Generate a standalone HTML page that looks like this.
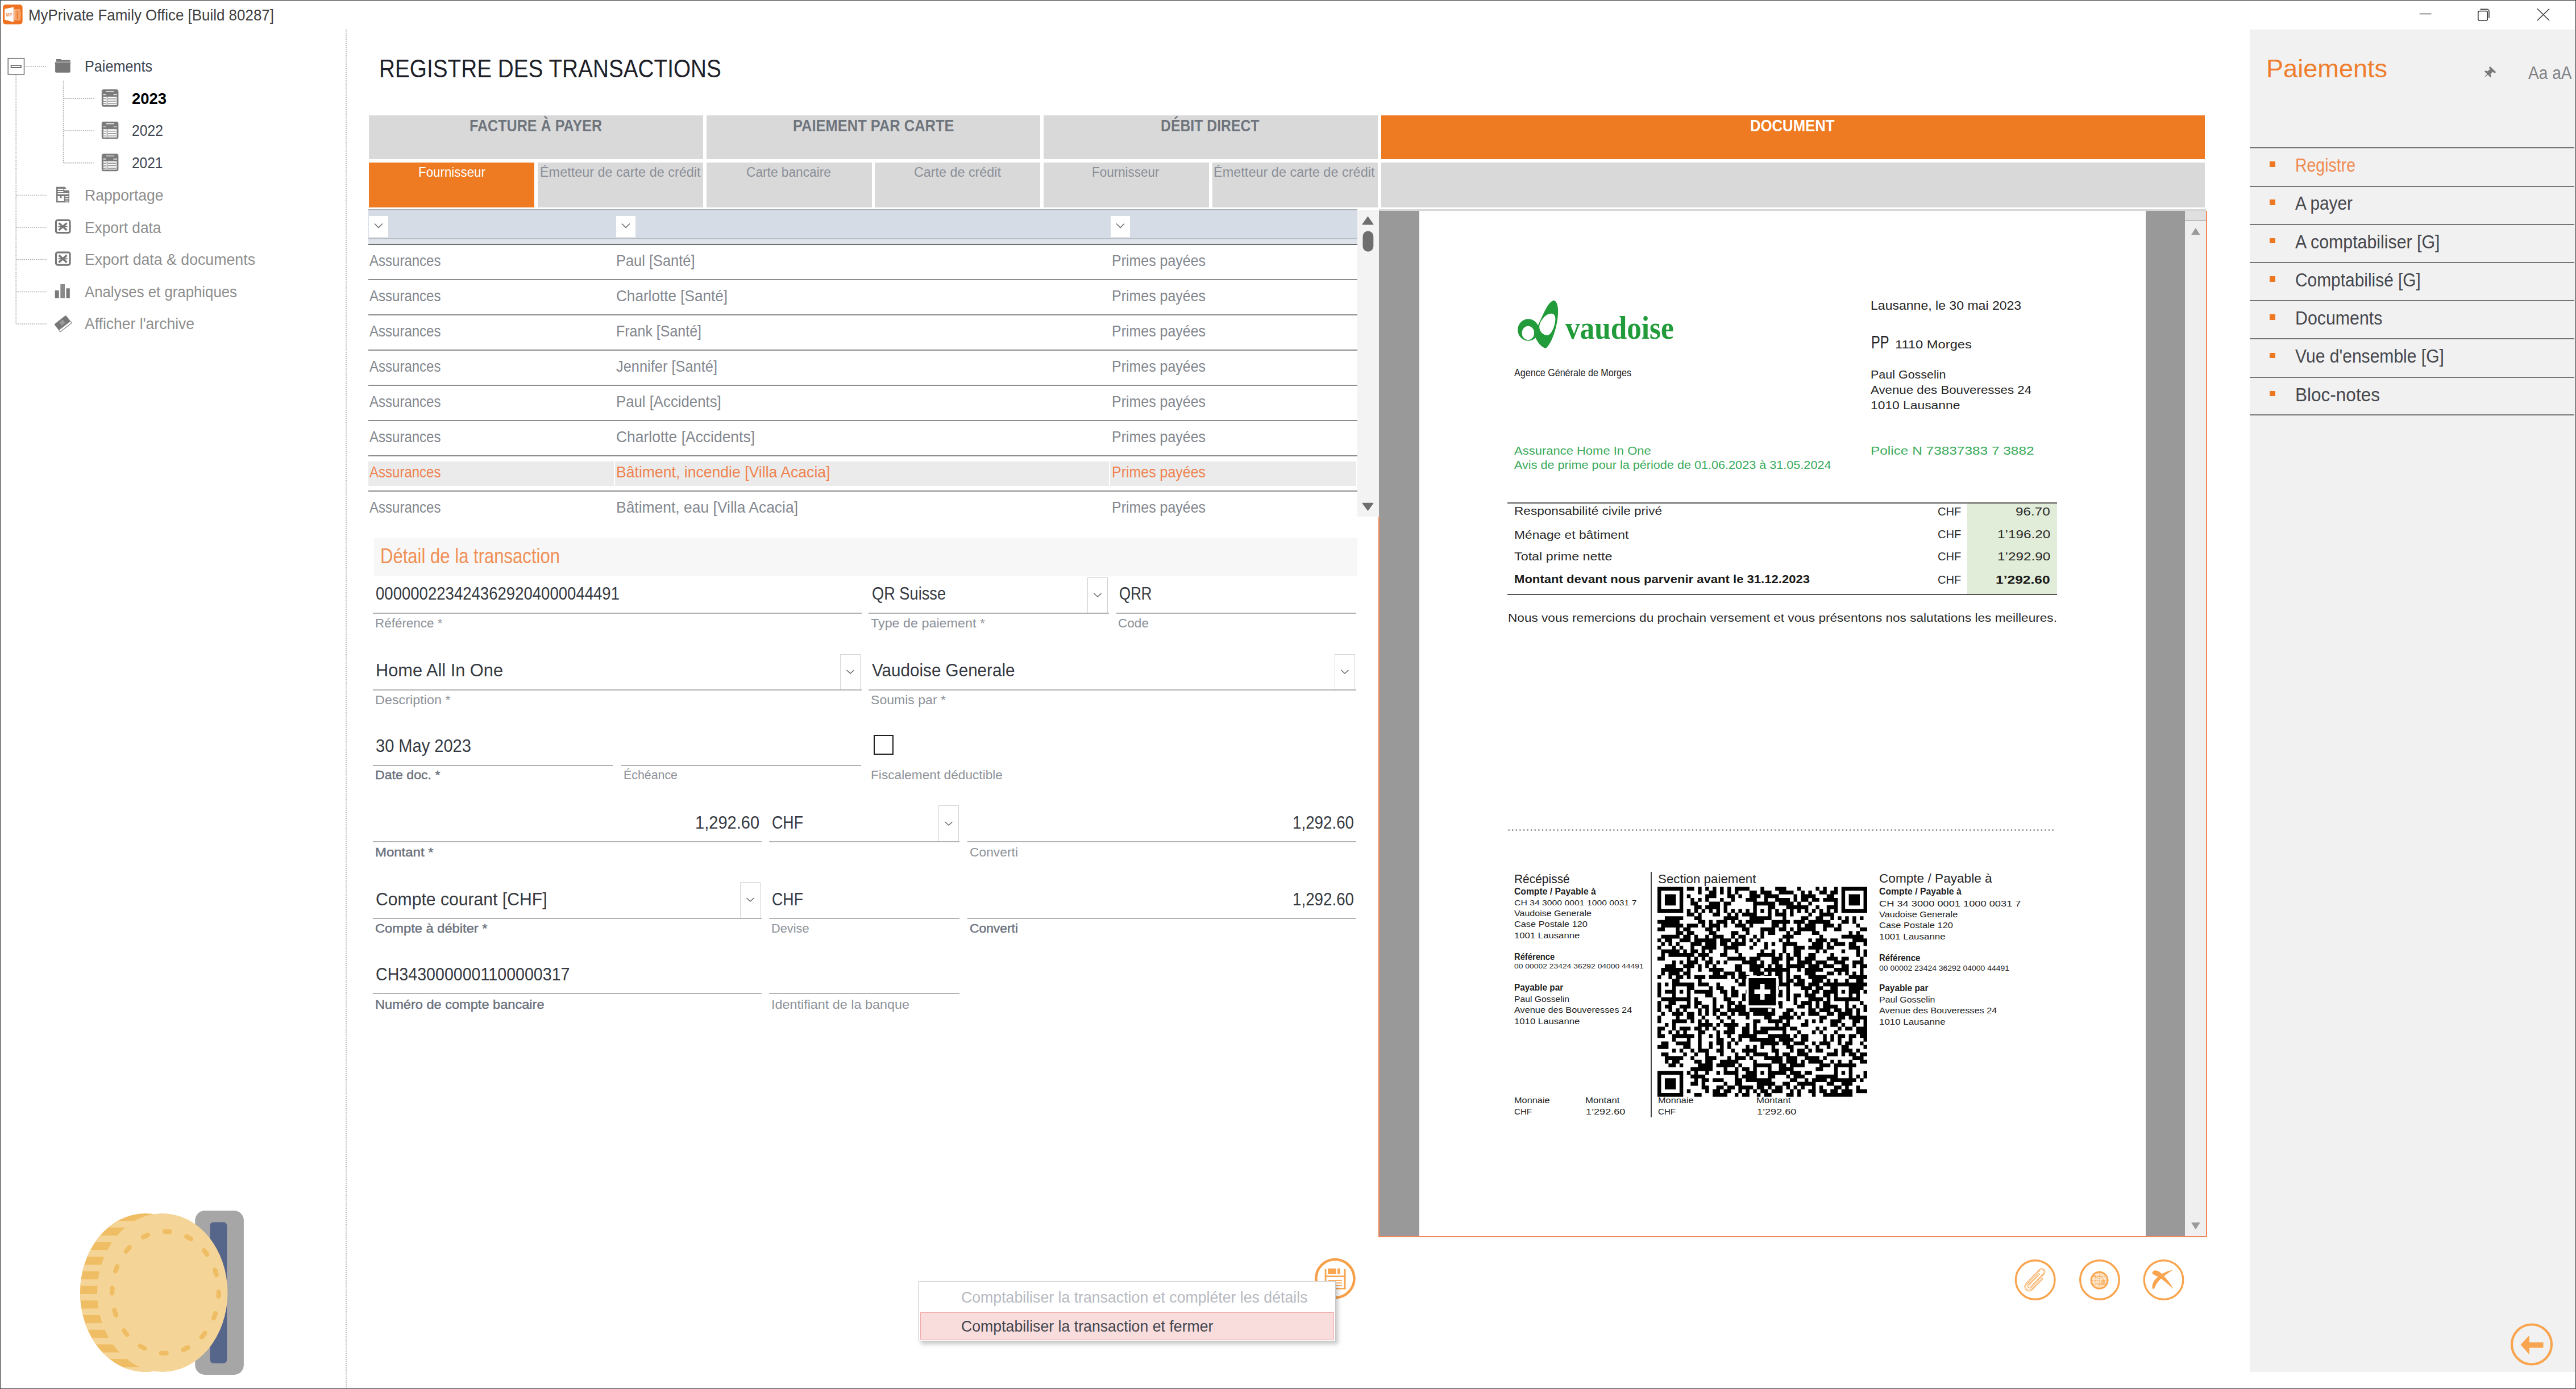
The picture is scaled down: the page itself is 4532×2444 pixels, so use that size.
<!DOCTYPE html>
<html lang="fr"><head><meta charset="utf-8"><title>MyPrivate Family Office</title>
<style>
html,body{margin:0;padding:0;background:#fff;}
body{width:4532px;height:2444px;position:relative;overflow:hidden;font-family:"Liberation Sans",sans-serif;}
.b{position:absolute;}
.t{position:absolute;white-space:pre;}
</style></head><body>
<svg class="b" style="left:0;top:0" width="45" height="48" viewBox="0 0 45 48">
<rect x="5" y="8.1" width="34.6" height="34.7" rx="5" fill="#ee7220"/>
<path d="M8.1 15.8 L23.9 12.6 V39 L8.1 34.5 Z" fill="#fff"/>
<path d="M25 16 H35.5 L37 24 L35.5 36 H25 Z" fill="#f4a46c"/>
<path d="M30.5 19.5 V34" stroke="#ee7220" stroke-width="1.6"/>
<path d="M25.5 18 V35" stroke="#fbd2b4" stroke-width="1" stroke-dasharray="1.5 1.5"/>
<text x="10.6" y="28.6" font-size="8.6" font-family="Liberation Sans" font-weight="700" fill="#f29558" textLength="11" lengthAdjust="spacingAndGlyphs">MP</text>
</svg>
<div class="t" style="left:50.00px;top:13.19px;font-size:27.30px;line-height:27.30px;color:#404040;transform:scaleX(0.9501);transform-origin:0 0;">MyPrivate Family Office [Build 80287]</div>
<svg class="b" style="left:4240px;top:5px" width="260" height="45" viewBox="4240 5 260 45">
<path d="M4256.7 24.5 H4277.5" stroke="#333" stroke-width="1.4"/>
<rect x="4359.8" y="19.5" width="16.5" height="16.5" rx="2.5" fill="none" stroke="#333" stroke-width="1.6"/>
<path d="M4363.5 16.2 h11.5 a4 4 0 0 1 4 4 v11.5" fill="none" stroke="#333" stroke-width="1.5"/>
<path d="M4464 15.5 L4485 36 M4485 15.5 L4464 36" stroke="#333" stroke-width="1.5"/>
</svg>
<svg class="b" style="left:0;top:0" width="620" height="2444"><g stroke="#a6a6a6" stroke-width="1.6" stroke-dasharray="1.7 1.7" fill="none"><path d="M45.0 117.0 H83.0"/><path d="M28.2 132.0 V570.5"/><path d="M29.0 343.5 H83.0"/><path d="M29.0 400.0 H83.0"/><path d="M29.0 456.5 H83.0"/><path d="M29.0 513.5 H83.0"/><path d="M29.0 570.0 H83.0"/><path d="M111.5 142.0 V287.0"/><path d="M112.0 173.2 H166.0"/><path d="M112.0 230.0 H166.0"/><path d="M112.0 286.6 H166.0"/><path d="M609.0 52.0 V2444.0"/></g></svg>
<svg class="b" style="left:12px;top:101px" width="34" height="34" viewBox="12 101 34 34">
<rect x="14.2" y="102.7" width="28.3" height="28.3" fill="#fff" stroke="#6e6e6e" stroke-width="1.5"/>
<rect x="19.5" y="115" width="17.5" height="3.8" fill="none" stroke="#555" stroke-width="1.5"/>
</svg>
<svg class="b" style="left:90px;top:95px" width="130" height="500" viewBox="90 95 130 500">
<g fill="#777">
<path d="M99 104 h8 l1.5 1.8 h15 v3 h-24.5 z"/>
<path d="M96.5 109.5 h28 l-0.8 4 v12.5 q0 1.8 -1.8 1.8 h-23 q-1.8 0 -1.8 -1.8 v-12.5 z"/>
</g>
<g id="yr">
<rect x="178.8" y="157.2" width="29.6" height="30.6" rx="3.5" fill="#7b7b7b"/>
<path d="M187 161 h14" stroke="#e8e8e8" stroke-width="1.6"/>
<path d="M181.5 166.5 h5 M199.5 166.5 h6.5" stroke="#e8e8e8" stroke-width="1.6"/>
<rect x="181.8" y="170.5" width="23.6" height="14.5" fill="#fff"/>
<path d="M182 174 h5 M182 178.5 h5 M182 182.5 h5 M190 174 h14.5 M190 178 h14.5 M190 182.5 h14.5 M188.5 171 v14" stroke="#8a8a8a" stroke-width="1.6"/>
</g>
<use href="#yr" y="56.8"/><use href="#yr" y="113.4"/>
<g fill="#7a7a7a">
<path d="M99 328.8 h15 l3.2 3.2 h-4 v3 h8.8 v21.3 h-23 z"/>
</g>
<g fill="#fff">
<rect x="101.5" y="332" width="10" height="2"/><rect x="101.5" y="336" width="10" height="2"/><rect x="101.5" y="340" width="19" height="2"/>
<rect x="101.5" y="345" width="11" height="9"/>
<rect x="114.5" y="345" width="6" height="1.5"/><rect x="114.5" y="349" width="6" height="1.5"/><rect x="114.5" y="353" width="6" height="1.5"/>
</g>
<rect x="105.5" y="344" width="3" height="5" fill="#7a7a7a"/>
<g id="xl">
<rect x="98.5" y="387.5" width="24.5" height="22" rx="3" fill="#fff" stroke="#777" stroke-width="3.2"/>
<path d="M103.5 392.5 L117.5 405 M117.5 392.5 L103.5 405" stroke="#777" stroke-width="3.5"/>
<path d="M102.5 398.7 h16" stroke="#777" stroke-width="2"/>
</g>
<use href="#xl" y="56.6"/>
<g fill="#7a7a7a">
<rect x="96.7" y="511" width="7" height="13.5"/><rect x="106.3" y="500" width="7.7" height="24.5" fill="#8a8a8a"/><rect x="116.5" y="507.3" width="6.3" height="17.2"/>
</g>
<g transform="translate(110.5 569) rotate(-38)">
<rect x="-13" y="-8" width="26" height="14" rx="1.5" fill="#777"/>
<rect x="-13" y="5" width="26" height="4" rx="1" fill="#fff" stroke="#8a8a8a" stroke-width="1.2"/>
<rect x="-4" y="-5" width="8" height="7" fill="#999"/>
</g>
</svg>
<div class="t" style="left:148.50px;top:103.32px;font-size:27.50px;line-height:27.50px;color:#3c4450;transform:scaleX(0.9158);transform-origin:0 0;">Paiements</div>
<div class="t" style="left:231.50px;top:159.92px;font-size:27.50px;line-height:27.50px;color:#000;font-weight:700;transform:scaleX(0.9969);transform-origin:0 0;">2023</div>
<div class="t" style="left:231.50px;top:216.32px;font-size:27.50px;line-height:27.50px;color:#3c4450;transform:scaleX(0.8989);transform-origin:0 0;">2022</div>
<div class="t" style="left:231.50px;top:272.72px;font-size:27.50px;line-height:27.50px;color:#3c4450;transform:scaleX(0.8907);transform-origin:0 0;">2021</div>
<div class="t" style="left:148.50px;top:329.92px;font-size:27.50px;line-height:27.50px;color:#8e8e8e;transform:scaleX(0.9637);transform-origin:0 0;">Rapportage</div>
<div class="t" style="left:148.50px;top:386.52px;font-size:27.50px;line-height:27.50px;color:#8e8e8e;transform:scaleX(0.9562);transform-origin:0 0;">Export data</div>
<div class="t" style="left:148.50px;top:443.12px;font-size:27.50px;line-height:27.50px;color:#8e8e8e;transform:scaleX(0.9715);transform-origin:0 0;">Export data &amp; documents</div>
<div class="t" style="left:148.50px;top:499.72px;font-size:27.50px;line-height:27.50px;color:#8e8e8e;transform:scaleX(0.9374);transform-origin:0 0;">Analyses et graphiques</div>
<div class="t" style="left:148.50px;top:556.32px;font-size:27.50px;line-height:27.50px;color:#8e8e8e;transform:scaleX(0.9631);transform-origin:0 0;">Afficher l&#x27;archive</div>
<svg class="b" style="left:130px;top:2120px" width="310" height="310" viewBox="130 2120 310 310">
<rect x="343.3" y="2130.2" width="85.6" height="288.7" rx="17" fill="#a6a6a6"/>
<rect x="369.5" y="2150.4" width="29.7" height="248.3" rx="6" fill="#56658a"/>
<clipPath id="coinclip"><ellipse cx="255.6" cy="2274.5" rx="114.7" ry="139.5"/></clipPath>
<ellipse cx="255.6" cy="2274.5" rx="114.7" ry="139.5" fill="#efbe64"/>
<g fill="#f5d597" clip-path="url(#coinclip)"><rect x="141" y="2122.6" width="130" height="11.5"/><rect x="141" y="2148.3" width="130" height="11.5"/><rect x="141" y="2174.0" width="130" height="11.5"/><rect x="141" y="2199.7" width="130" height="11.5"/><rect x="141" y="2225.4" width="130" height="11.5"/><rect x="141" y="2251.1" width="130" height="11.5"/><rect x="141" y="2276.8" width="130" height="11.5"/><rect x="141" y="2302.5" width="130" height="11.5"/><rect x="141" y="2328.2" width="130" height="11.5"/><rect x="141" y="2353.9" width="130" height="11.5"/><rect x="141" y="2379.6" width="130" height="11.5"/><rect x="141" y="2405.3" width="130" height="11.5"/></g>
<ellipse cx="285.7" cy="2274.5" rx="114.7" ry="139.5" fill="#f5d597"/>
<ellipse cx="291" cy="2274" rx="93.8" ry="107" fill="none" stroke="#efbe64" stroke-width="8.3" stroke-linecap="round" stroke-dasharray="9 30.5" stroke-dashoffset="2"/>
</svg>
<div class="t" style="left:666.50px;top:99.59px;font-size:43.60px;line-height:43.60px;color:#1e1f28;transform:scaleX(0.8885);transform-origin:0 0;">REGISTRE DES TRANSACTIONS</div>
<div class="b" style="left:649.00px;top:202.50px;width:587.75px;height:77.50px;background:#d9d9d9;"></div>
<div class="b" style="left:1242.50px;top:202.50px;width:587.75px;height:77.50px;background:#d9d9d9;"></div>
<div class="b" style="left:1836.00px;top:202.50px;width:587.75px;height:77.50px;background:#d9d9d9;"></div>
<div class="b" style="left:2429.50px;top:202.50px;width:1449.80px;height:77.50px;background:#ee7a22;"></div>
<div class="b" style="left:649.00px;top:286.25px;width:291.00px;height:78.75px;background:#ee7a22;"></div>
<div class="b" style="left:945.75px;top:286.25px;width:291.00px;height:78.75px;background:#d9d9d9;"></div>
<div class="b" style="left:1242.50px;top:286.25px;width:291.00px;height:78.75px;background:#d9d9d9;"></div>
<div class="b" style="left:1539.25px;top:286.25px;width:291.00px;height:78.75px;background:#d9d9d9;"></div>
<div class="b" style="left:1836.00px;top:286.25px;width:291.00px;height:78.75px;background:#d9d9d9;"></div>
<div class="b" style="left:2132.75px;top:286.25px;width:291.00px;height:78.75px;background:#d9d9d9;"></div>
<div class="b" style="left:2429.50px;top:286.25px;width:1449.80px;height:78.75px;background:#d9d9d9;"></div>
<div class="t" style="left:826.00px;top:206.70px;font-size:29.00px;line-height:29.00px;color:#6e747c;font-weight:700;transform:scaleX(0.8659);transform-origin:0 0;">FACTURE À PAYER</div>
<div class="t" style="left:1394.50px;top:206.70px;font-size:29.00px;line-height:29.00px;color:#6e747c;font-weight:700;transform:scaleX(0.8783);transform-origin:0 0;">PAIEMENT PAR CARTE</div>
<div class="t" style="left:2042.00px;top:206.70px;font-size:29.00px;line-height:29.00px;color:#6e747c;font-weight:700;transform:scaleX(0.8547);transform-origin:0 0;">DÉBIT DIRECT</div>
<div class="t" style="left:3078.50px;top:206.70px;font-size:29.00px;line-height:29.00px;color:#ffffff;font-weight:700;transform:scaleX(0.8864);transform-origin:0 0;">DOCUMENT</div>
<div class="t" style="left:735.75px;top:290.68px;font-size:24.30px;line-height:24.30px;color:#ffffff;transform:scaleX(0.9197);transform-origin:0 0;">Fournisseur</div>
<div class="t" style="left:950.00px;top:290.68px;font-size:24.30px;line-height:24.30px;color:#8a8f98;transform:scaleX(0.9638);transform-origin:0 0;">Émetteur de carte de crédit</div>
<div class="t" style="left:1313.00px;top:290.68px;font-size:24.30px;line-height:24.30px;color:#8a8f98;transform:scaleX(0.9349);transform-origin:0 0;">Carte bancaire</div>
<div class="t" style="left:1608.00px;top:290.68px;font-size:24.30px;line-height:24.30px;color:#8a8f98;transform:scaleX(0.9599);transform-origin:0 0;">Carte de crédit</div>
<div class="t" style="left:1920.50px;top:290.68px;font-size:24.30px;line-height:24.30px;color:#8a8f98;transform:scaleX(0.9236);transform-origin:0 0;">Fournisseur</div>
<div class="t" style="left:2134.50px;top:290.68px;font-size:24.30px;line-height:24.30px;color:#8a8f98;transform:scaleX(0.9672);transform-origin:0 0;">Émetteur de carte de crédit</div>
<div class="b" style="left:648.00px;top:367.50px;width:1740.00px;height:51.50px;background:#d5dce6;"></div>
<div class="b" style="left:648.00px;top:367.50px;width:1740.00px;height:2.00px;background:#a9afb7;"></div>
<div class="b" style="left:648.00px;top:419.00px;width:1740.00px;height:2.00px;background:#b9bfc7;"></div>
<div class="b" style="left:648.00px;top:421.00px;width:1740.00px;height:8.00px;background:#dfe4eb;"></div>
<div class="b" style="left:648.00px;top:429.20px;width:1740.00px;height:2.20px;background:#6b6e73;"></div>
<div class="b" style="left:2425.50px;top:368.00px;width:1455.50px;height:2.50px;background:#d6d6d6;"></div>
<div class="b" style="left:648.75px;top:380px;width:33.75px;height:37.5px;background:#fff;box-shadow:0 1px 0 #b8bcc2"></div>
<svg class="b" style="left:655.65px;top:390px" width="20" height="14" viewBox="0 0 20 14"><path d="M3 3.5 L10 10.5 L17 3.5" fill="none" stroke="#737373" stroke-width="1.7"/></svg>
<div class="b" style="left:1083.75px;top:380px;width:33.75px;height:37.5px;background:#fff;box-shadow:0 1px 0 #b8bcc2"></div>
<svg class="b" style="left:1090.65px;top:390px" width="20" height="14" viewBox="0 0 20 14"><path d="M3 3.5 L10 10.5 L17 3.5" fill="none" stroke="#737373" stroke-width="1.7"/></svg>
<div class="b" style="left:1954.00px;top:380px;width:33.75px;height:37.5px;background:#fff;box-shadow:0 1px 0 #b8bcc2"></div>
<svg class="b" style="left:1960.90px;top:390px" width="20" height="14" viewBox="0 0 20 14"><path d="M3 3.5 L10 10.5 L17 3.5" fill="none" stroke="#737373" stroke-width="1.7"/></svg>
<div class="b" style="left:2388px;top:370px;width:37.5px;height:539px;background:#f3f3f3"></div>
<svg class="b" style="left:2388px;top:370px" width="38" height="540" viewBox="2388 370 38 540">
<path d="M2406.5 380.5 L2416.5 394.5 Q2417 395.5 2415.5 395.5 H2397.5 Q2396 395.5 2396.5 394.5 Z" fill="#6e6e6e"/>
<rect x="2397.5" y="406.4" width="18.8" height="36.4" rx="9.4" fill="#6e6e6e"/>
<path d="M2406.5 899 L2416.2 886 Q2416.8 884.8 2415.3 884.8 H2397.7 Q2396.2 884.8 2396.8 886 Z" fill="#6e6e6e"/>
</svg>
<div class="b" style="left:648.00px;top:491.30px;width:1740.00px;height:2.10px;background:#8c8c8c;"></div>
<div class="b" style="left:648.00px;top:553.30px;width:1740.00px;height:2.10px;background:#8c8c8c;"></div>
<div class="b" style="left:648.00px;top:615.30px;width:1740.00px;height:2.10px;background:#8c8c8c;"></div>
<div class="b" style="left:648.00px;top:677.30px;width:1740.00px;height:2.10px;background:#8c8c8c;"></div>
<div class="b" style="left:648.00px;top:739.30px;width:1740.00px;height:2.10px;background:#8c8c8c;"></div>
<div class="b" style="left:648.00px;top:801.30px;width:1740.00px;height:2.10px;background:#8c8c8c;"></div>
<div class="b" style="left:648.00px;top:863.30px;width:1740.00px;height:2.10px;background:#8c8c8c;"></div>
<div class="b" style="left:648.00px;top:811.50px;width:432.00px;height:43.50px;background:#ebebeb;"></div>
<div class="b" style="left:1082.00px;top:811.50px;width:868.50px;height:43.50px;background:#ebebeb;"></div>
<div class="b" style="left:1952.50px;top:811.50px;width:433.00px;height:43.50px;background:#ebebeb;"></div>
<div class="t" style="left:650.00px;top:445.23px;font-size:27.25px;line-height:27.25px;color:#83878e;transform:scaleX(0.8814);transform-origin:0 0;">Assurances</div>
<div class="t" style="left:1084.00px;top:445.23px;font-size:27.25px;line-height:27.25px;color:#83878e;transform:scaleX(0.9329);transform-origin:0 0;">Paul [Santé]</div>
<div class="t" style="left:1955.50px;top:445.23px;font-size:27.25px;line-height:27.25px;color:#83878e;transform:scaleX(0.9155);transform-origin:0 0;">Primes payées</div>
<div class="t" style="left:650.00px;top:507.23px;font-size:27.25px;line-height:27.25px;color:#83878e;transform:scaleX(0.8814);transform-origin:0 0;">Assurances</div>
<div class="t" style="left:1084.00px;top:507.23px;font-size:27.25px;line-height:27.25px;color:#83878e;transform:scaleX(0.9585);transform-origin:0 0;">Charlotte [Santé]</div>
<div class="t" style="left:1955.50px;top:507.23px;font-size:27.25px;line-height:27.25px;color:#83878e;transform:scaleX(0.9155);transform-origin:0 0;">Primes payées</div>
<div class="t" style="left:650.00px;top:569.23px;font-size:27.25px;line-height:27.25px;color:#83878e;transform:scaleX(0.8814);transform-origin:0 0;">Assurances</div>
<div class="t" style="left:1084.00px;top:569.23px;font-size:27.25px;line-height:27.25px;color:#83878e;transform:scaleX(0.9170);transform-origin:0 0;">Frank [Santé]</div>
<div class="t" style="left:1955.50px;top:569.23px;font-size:27.25px;line-height:27.25px;color:#83878e;transform:scaleX(0.9155);transform-origin:0 0;">Primes payées</div>
<div class="t" style="left:650.00px;top:631.23px;font-size:27.25px;line-height:27.25px;color:#83878e;transform:scaleX(0.8814);transform-origin:0 0;">Assurances</div>
<div class="t" style="left:1084.00px;top:631.23px;font-size:27.25px;line-height:27.25px;color:#83878e;transform:scaleX(0.9326);transform-origin:0 0;">Jennifer [Santé]</div>
<div class="t" style="left:1955.50px;top:631.23px;font-size:27.25px;line-height:27.25px;color:#83878e;transform:scaleX(0.9155);transform-origin:0 0;">Primes payées</div>
<div class="t" style="left:650.00px;top:693.23px;font-size:27.25px;line-height:27.25px;color:#83878e;transform:scaleX(0.8814);transform-origin:0 0;">Assurances</div>
<div class="t" style="left:1084.00px;top:693.23px;font-size:27.25px;line-height:27.25px;color:#83878e;transform:scaleX(0.9453);transform-origin:0 0;">Paul [Accidents]</div>
<div class="t" style="left:1955.50px;top:693.23px;font-size:27.25px;line-height:27.25px;color:#83878e;transform:scaleX(0.9155);transform-origin:0 0;">Primes payées</div>
<div class="t" style="left:650.00px;top:755.23px;font-size:27.25px;line-height:27.25px;color:#83878e;transform:scaleX(0.8814);transform-origin:0 0;">Assurances</div>
<div class="t" style="left:1084.00px;top:755.23px;font-size:27.25px;line-height:27.25px;color:#83878e;transform:scaleX(0.9704);transform-origin:0 0;">Charlotte [Accidents]</div>
<div class="t" style="left:1955.50px;top:755.23px;font-size:27.25px;line-height:27.25px;color:#83878e;transform:scaleX(0.9155);transform-origin:0 0;">Primes payées</div>
<div class="t" style="left:650.00px;top:817.23px;font-size:27.25px;line-height:27.25px;color:#ef8350;transform:scaleX(0.8814);transform-origin:0 0;">Assurances</div>
<div class="t" style="left:1084.00px;top:817.23px;font-size:27.25px;line-height:27.25px;color:#ef8350;transform:scaleX(0.9760);transform-origin:0 0;">Bâtiment, incendie [Villa Acacia]</div>
<div class="t" style="left:1955.50px;top:817.23px;font-size:27.25px;line-height:27.25px;color:#ef8350;transform:scaleX(0.9155);transform-origin:0 0;">Primes payées</div>
<div class="t" style="left:650.00px;top:879.23px;font-size:27.25px;line-height:27.25px;color:#83878e;transform:scaleX(0.8814);transform-origin:0 0;">Assurances</div>
<div class="t" style="left:1084.00px;top:879.23px;font-size:27.25px;line-height:27.25px;color:#83878e;transform:scaleX(0.9705);transform-origin:0 0;">Bâtiment, eau [Villa Acacia]</div>
<div class="t" style="left:1955.50px;top:879.23px;font-size:27.25px;line-height:27.25px;color:#83878e;transform:scaleX(0.9155);transform-origin:0 0;">Primes payées</div>
<div class="b" style="left:657.50px;top:945.50px;width:1730.50px;height:68.50px;background:#f7f7f7;"></div>
<div class="t" style="left:669.00px;top:960.77px;font-size:36.30px;line-height:36.30px;color:#f18f55;transform:scaleX(0.8558);transform-origin:0 0;">Détail de la transaction</div>
<div class="b" style="left:656.00px;top:1078.00px;width:859.50px;height:2.20px;background:#b3b3b3;"></div>
<div class="b" style="left:1528.00px;top:1078.00px;width:422.50px;height:2.20px;background:#b3b3b3;"></div>
<div class="b" style="left:1964.00px;top:1078.00px;width:421.50px;height:2.20px;background:#b3b3b3;"></div>
<div class="b" style="left:656.00px;top:1213.00px;width:859.50px;height:2.20px;background:#b3b3b3;"></div>
<div class="b" style="left:1528.00px;top:1213.00px;width:857.50px;height:2.20px;background:#b3b3b3;"></div>
<div class="b" style="left:655.70px;top:1345.60px;width:422.70px;height:2.20px;background:#b3b3b3;"></div>
<div class="b" style="left:1092.70px;top:1345.60px;width:422.80px;height:2.20px;background:#b3b3b3;"></div>
<div class="b" style="left:656.00px;top:1480.00px;width:683.50px;height:2.20px;background:#b3b3b3;"></div>
<div class="b" style="left:1353.00px;top:1480.00px;width:335.00px;height:2.20px;background:#b3b3b3;"></div>
<div class="b" style="left:1701.50px;top:1480.00px;width:684.00px;height:2.20px;background:#b3b3b3;"></div>
<div class="b" style="left:656.00px;top:1614.50px;width:683.50px;height:2.20px;background:#b3b3b3;"></div>
<div class="b" style="left:1353.00px;top:1614.50px;width:335.00px;height:2.20px;background:#b3b3b3;"></div>
<div class="b" style="left:1701.50px;top:1614.50px;width:684.00px;height:2.20px;background:#b3b3b3;"></div>
<div class="b" style="left:656.00px;top:1747.00px;width:683.50px;height:2.20px;background:#b3b3b3;"></div>
<div class="b" style="left:1353.00px;top:1747.00px;width:335.00px;height:2.20px;background:#b3b3b3;"></div>
<div class="b" style="left:1913.00px;top:1015.50px;width:35.50px;height:62.50px;background:#fff;border:1.3px solid #d4d4d4;border-bottom:none;box-sizing:border-box"></div>
<svg class="b" style="left:1920.75px;top:1039.75px" width="20" height="14" viewBox="0 0 20 14"><path d="M3.5 4 L10 10 L16.5 4" fill="none" stroke="#6a6a6a" stroke-width="1.6"/></svg>
<div class="b" style="left:1478.00px;top:1150.50px;width:35.50px;height:62.50px;background:#fff;border:1.3px solid #d4d4d4;border-bottom:none;box-sizing:border-box"></div>
<svg class="b" style="left:1485.75px;top:1174.75px" width="20" height="14" viewBox="0 0 20 14"><path d="M3.5 4 L10 10 L16.5 4" fill="none" stroke="#6a6a6a" stroke-width="1.6"/></svg>
<div class="b" style="left:2348.00px;top:1150.50px;width:35.50px;height:62.50px;background:#fff;border:1.3px solid #d4d4d4;border-bottom:none;box-sizing:border-box"></div>
<svg class="b" style="left:2355.75px;top:1174.75px" width="20" height="14" viewBox="0 0 20 14"><path d="M3.5 4 L10 10 L16.5 4" fill="none" stroke="#6a6a6a" stroke-width="1.6"/></svg>
<div class="b" style="left:1650.50px;top:1417.00px;width:36.00px;height:63.00px;background:#fff;border:1.3px solid #d4d4d4;border-bottom:none;box-sizing:border-box"></div>
<svg class="b" style="left:1658.50px;top:1441.50px" width="20" height="14" viewBox="0 0 20 14"><path d="M3.5 4 L10 10 L16.5 4" fill="none" stroke="#6a6a6a" stroke-width="1.6"/></svg>
<div class="b" style="left:1302.00px;top:1552.00px;width:36.00px;height:62.50px;background:#fff;border:1.3px solid #d4d4d4;border-bottom:none;box-sizing:border-box"></div>
<svg class="b" style="left:1310.00px;top:1576.25px" width="20" height="14" viewBox="0 0 20 14"><path d="M3.5 4 L10 10 L16.5 4" fill="none" stroke="#6a6a6a" stroke-width="1.6"/></svg>
<div class="b" style="left:1537px;top:1293px;width:35px;height:35px;border:2.6px solid #1e1e1e;box-sizing:border-box;background:#fff"></div>
<div class="t" style="left:661.00px;top:1028.55px;font-size:31.25px;line-height:31.25px;color:#353941;transform:scaleX(0.8816);transform-origin:0 0;">0000002234243629204000044491</div>
<div class="t" style="left:1534.00px;top:1028.55px;font-size:31.25px;line-height:31.25px;color:#353941;transform:scaleX(0.8705);transform-origin:0 0;">QR Suisse</div>
<div class="t" style="left:1969.00px;top:1028.55px;font-size:31.25px;line-height:31.25px;color:#353941;transform:scaleX(0.8281);transform-origin:0 0;">QRR</div>
<div class="t" style="left:661.00px;top:1164.05px;font-size:31.25px;line-height:31.25px;color:#353941;transform:scaleX(0.9845);transform-origin:0 0;">Home All In One</div>
<div class="t" style="left:1534.00px;top:1164.05px;font-size:31.25px;line-height:31.25px;color:#353941;transform:scaleX(0.9483);transform-origin:0 0;">Vaudoise Generale</div>
<div class="t" style="left:661.40px;top:1296.55px;font-size:31.25px;line-height:31.25px;color:#353941;transform:scaleX(0.9292);transform-origin:0 0;">30 May 2023</div>
<div class="t" style="left:1223.36px;top:1431.55px;font-size:31.25px;line-height:31.25px;color:#353941;transform:scaleX(0.9300);transform-origin:0 0;">1,292.60</div>
<div class="t" style="left:1358.00px;top:1431.55px;font-size:31.25px;line-height:31.25px;color:#353941;transform:scaleX(0.8564);transform-origin:0 0;">CHF</div>
<div class="t" style="left:2274.00px;top:1431.55px;font-size:31.25px;line-height:31.25px;color:#353941;transform:scaleX(0.8877);transform-origin:0 0;">1,292.60</div>
<div class="t" style="left:661.00px;top:1566.55px;font-size:31.25px;line-height:31.25px;color:#353941;transform:scaleX(0.9645);transform-origin:0 0;">Compte courant [CHF]</div>
<div class="t" style="left:1358.00px;top:1566.55px;font-size:31.25px;line-height:31.25px;color:#353941;transform:scaleX(0.8564);transform-origin:0 0;">CHF</div>
<div class="t" style="left:2274.00px;top:1566.55px;font-size:31.25px;line-height:31.25px;color:#353941;transform:scaleX(0.8877);transform-origin:0 0;">1,292.60</div>
<div class="t" style="left:661.00px;top:1699.05px;font-size:31.25px;line-height:31.25px;color:#353941;transform:scaleX(0.9155);transform-origin:0 0;">CH3430000001100000317</div>
<div class="t" style="left:660.00px;top:1086.38px;font-size:22.00px;line-height:22.00px;color:#8d9299;transform:scaleX(1.0200);transform-origin:0 0;">Référence *</div>
<div class="t" style="left:1532.00px;top:1086.38px;font-size:22.00px;line-height:22.00px;color:#8d9299;transform:scaleX(1.0603);transform-origin:0 0;">Type de paiement *</div>
<div class="t" style="left:1967.00px;top:1086.38px;font-size:22.00px;line-height:22.00px;color:#8d9299;transform:scaleX(1.0266);transform-origin:0 0;">Code</div>
<div class="t" style="left:660.00px;top:1221.38px;font-size:22.00px;line-height:22.00px;color:#8d9299;transform:scaleX(1.0624);transform-origin:0 0;">Description *</div>
<div class="t" style="left:1532.00px;top:1221.38px;font-size:22.00px;line-height:22.00px;color:#8d9299;transform:scaleX(1.0480);transform-origin:0 0;">Soumis par *</div>
<div class="t" style="left:659.60px;top:1353.38px;font-size:22.00px;line-height:22.00px;color:#6b717c;transform:scaleX(1.0511);transform-origin:0 0;-webkit-text-stroke:0.45px #6b717c;">Date doc. *</div>
<div class="t" style="left:1096.50px;top:1353.38px;font-size:22.00px;line-height:22.00px;color:#8d9299;transform:scaleX(0.9708);transform-origin:0 0;">Échéance</div>
<div class="t" style="left:1532.00px;top:1353.38px;font-size:22.00px;line-height:22.00px;color:#8d9299;transform:scaleX(1.0310);transform-origin:0 0;">Fiscalement déductible</div>
<div class="t" style="left:660.00px;top:1488.88px;font-size:22.00px;line-height:22.00px;color:#6b717c;transform:scaleX(1.0886);transform-origin:0 0;-webkit-text-stroke:0.45px #6b717c;">Montant *</div>
<div class="t" style="left:1705.50px;top:1488.88px;font-size:22.00px;line-height:22.00px;color:#8d9299;transform:scaleX(1.0375);transform-origin:0 0;">Converti</div>
<div class="t" style="left:660.00px;top:1623.38px;font-size:22.00px;line-height:22.00px;color:#6b717c;transform:scaleX(1.0767);transform-origin:0 0;-webkit-text-stroke:0.45px #6b717c;">Compte à débiter *</div>
<div class="t" style="left:1356.50px;top:1623.38px;font-size:22.00px;line-height:22.00px;color:#8d9299;transform:scaleX(0.9888);transform-origin:0 0;">Devise</div>
<div class="t" style="left:1705.50px;top:1623.38px;font-size:22.00px;line-height:22.00px;color:#6b717c;transform:scaleX(1.0375);transform-origin:0 0;-webkit-text-stroke:0.45px #6b717c;">Converti</div>
<div class="t" style="left:660.00px;top:1756.88px;font-size:22.00px;line-height:22.00px;color:#6b717c;transform:scaleX(1.0717);transform-origin:0 0;-webkit-text-stroke:0.45px #6b717c;">Numéro de compte bancaire</div>
<div class="t" style="left:1356.50px;top:1756.88px;font-size:22.00px;line-height:22.00px;color:#8d9299;transform:scaleX(1.0623);transform-origin:0 0;">Identifiant de la banque</div>
<div class="b" style="left:2425.50px;top:370.50px;width:71.00px;height:1805.00px;background:#999999;"></div>
<div class="b" style="left:3774.70px;top:370.50px;width:69.40px;height:1805.00px;background:#999999;"></div>
<div class="b" style="left:3844.10px;top:370.50px;width:37.10px;height:1805.00px;background:#efefef;"></div>
<div class="b" style="left:3844.10px;top:370.50px;width:37.10px;height:17.50px;background:#e0e0e0;"></div>
<div class="b" style="left:3844.10px;top:387.00px;width:37.10px;height:2.00px;background:#bdbdbd;"></div>
<svg class="b" style="left:3844px;top:390px" width="38" height="1790" viewBox="3844 390 38 1790"><path d="M3862.8 400.9 L3870.7 413.2 H3855 Z" fill="#9a9a9a"/><path d="M3862.9 2163.3 L3870.8 2151 H3855 Z" fill="#9a9a9a"/></svg>
<div class="b" style="left:2424.50px;top:909.00px;width:2.00px;height:1267.50px;background:#f2875c;"></div>
<div class="b" style="left:3881.20px;top:370.50px;width:2.00px;height:1806.00px;background:#f2875c;"></div>
<div class="b" style="left:2424.50px;top:2174.50px;width:1458.70px;height:2.00px;background:#f2875c;"></div>
<svg class="b" style="left:2660px;top:520px" width="100" height="100" viewBox="2660 520 100 100">
<path fill="#229b3b" fill-rule="evenodd" d="M2670.1 580.5 a18.7 19.1 0 1 0 37.4 0 a18.7 19.1 0 1 0 -37.4 0 Z M2677.6 585.9 a10.8 12.25 0 1 1 21.6 0 a10.8 12.25 0 1 1 -21.6 0 Z"/>
<path fill="#229b3b" fill-rule="evenodd" d="M2733.4 528.6 C2739 529 2742 540 2741 552 C2740 575 2730 605 2719.5 612.9 C2711 611 2703 600 2700 590 C2698.5 583 2702 577 2706 572 C2714 557 2722 532 2733.4 528.6 Z M2728.4 551.7 C2734 551 2737 556 2736.3 563.2 C2735 576 2729 589 2722.6 589.8 C2714 590 2708 582 2708.2 574.7 C2709 565 2719 552 2728.4 551.7 Z"/>
</svg>
<div class="t" style="left:2753.75px;top:547.67px;font-size:58.00px;line-height:58.00px;color:#229b3b;font-weight:700;font-family:'Liberation Serif', serif;transform:scaleX(0.8834);transform-origin:0 0;">vaudoise</div>
<div class="t" style="left:2663.75px;top:647.09px;font-size:18.20px;line-height:18.20px;color:#262626;transform:scaleX(0.8863);transform-origin:0 0;">Agence Générale de Morges</div>
<div class="t" style="left:3291.00px;top:527.25px;font-size:21.80px;line-height:21.80px;color:#262626;transform:scaleX(1.0570);transform-origin:0 0;">Lausanne, le 30 mai 2023</div>
<div class="t" style="left:3291.70px;top:587.28px;font-size:30.50px;line-height:30.50px;color:#262626;transform:scaleX(0.7742);transform-origin:0 0;">PP</div>
<div class="t" style="left:3334.40px;top:594.62px;font-size:21.00px;line-height:21.00px;color:#262626;transform:scaleX(1.1292);transform-origin:0 0;">1110 Morges</div>
<div class="t" style="left:3291.00px;top:649.48px;font-size:20.70px;line-height:20.70px;color:#262626;transform:scaleX(1.0382);transform-origin:0 0;">Paul Gosselin</div>
<div class="t" style="left:3291.00px;top:676.48px;font-size:20.70px;line-height:20.70px;color:#262626;transform:scaleX(1.0762);transform-origin:0 0;">Avenue des Bouveresses 24</div>
<div class="t" style="left:3291.00px;top:703.48px;font-size:20.70px;line-height:20.70px;color:#262626;transform:scaleX(1.1033);transform-origin:0 0;">1010 Lausanne</div>
<div class="t" style="left:2663.75px;top:783.07px;font-size:20.00px;line-height:20.00px;color:#3aab5a;transform:scaleX(1.0993);transform-origin:0 0;">Assurance Home In One</div>
<div class="t" style="left:2663.75px;top:808.07px;font-size:20.00px;line-height:20.00px;color:#3aab5a;transform:scaleX(1.0813);transform-origin:0 0;">Avis de prime pour la période de 01.06.2023 à 31.05.2024</div>
<div class="t" style="left:3291.00px;top:783.07px;font-size:20.00px;line-height:20.00px;color:#3aab5a;transform:scaleX(1.2196);transform-origin:0 0;">Police N 73837383 7 3882</div>
<div class="b" style="left:3460.60px;top:885.50px;width:158.70px;height:160.50px;background:#e1edd8;"></div>
<div class="b" style="left:2652.00px;top:884.00px;width:967.30px;height:2.20px;background:#555;"></div>
<div class="b" style="left:2652.00px;top:1045.00px;width:967.30px;height:2.20px;background:#555;"></div>
<div class="t" style="left:2663.75px;top:889.32px;font-size:20.00px;line-height:20.00px;color:#2a2a2a;transform:scaleX(1.1299);transform-origin:0 0;">Responsabilité civile privé</div>
<div class="t" style="left:2663.75px;top:930.57px;font-size:20.00px;line-height:20.00px;color:#2a2a2a;transform:scaleX(1.1384);transform-origin:0 0;">Ménage et bâtiment</div>
<div class="t" style="left:2663.75px;top:969.32px;font-size:20.00px;line-height:20.00px;color:#2a2a2a;transform:scaleX(1.1666);transform-origin:0 0;">Total prime nette</div>
<div class="t" style="left:2663.75px;top:1009.32px;font-size:20.00px;line-height:20.00px;color:#1a1a1a;font-weight:700;transform:scaleX(1.1034);transform-origin:0 0;">Montant devant nous parvenir avant le 31.12.2023</div>
<div class="t" style="left:3408.70px;top:889.87px;font-size:20.00px;line-height:20.00px;color:#2a2a2a;transform:scaleX(1.0073);transform-origin:0 0;">CHF</div>
<div class="t" style="left:3408.70px;top:930.37px;font-size:20.00px;line-height:20.00px;color:#2a2a2a;transform:scaleX(1.0073);transform-origin:0 0;">CHF</div>
<div class="t" style="left:3408.70px;top:969.07px;font-size:20.00px;line-height:20.00px;color:#2a2a2a;transform:scaleX(1.0073);transform-origin:0 0;">CHF</div>
<div class="t" style="left:3408.70px;top:1009.57px;font-size:20.00px;line-height:20.00px;color:#2a2a2a;transform:scaleX(1.0073);transform-origin:0 0;">CHF</div>
<div class="t" style="left:3546.00px;top:889.87px;font-size:20.00px;line-height:20.00px;color:#2a2a2a;transform:scaleX(1.2130);transform-origin:0 0;">96.70</div>
<div class="t" style="left:3513.50px;top:930.37px;font-size:20.00px;line-height:20.00px;color:#2a2a2a;transform:scaleX(1.2145);transform-origin:0 0;">1’196.20</div>
<div class="t" style="left:3513.50px;top:969.07px;font-size:20.00px;line-height:20.00px;color:#2a2a2a;transform:scaleX(1.2145);transform-origin:0 0;">1’292.90</div>
<div class="t" style="left:3511.00px;top:1009.57px;font-size:20.00px;line-height:20.00px;color:#1a1a1a;font-weight:700;transform:scaleX(1.2291);transform-origin:0 0;">1’292.60</div>
<div class="t" style="left:2652.50px;top:1076.82px;font-size:20.00px;line-height:20.00px;color:#2a2a2a;transform:scaleX(1.1299);transform-origin:0 0;">Nous vous remercions du prochain versement et vous présentons nos salutations les meilleures.</div>
<svg class="b" style="left:2650px;top:1455px" width="970" height="10"><path d="M3.5 5.5 H966" stroke="#555" stroke-width="2.2" stroke-dasharray="2.2 4.4"/></svg>
<div class="b" style="left:2904.30px;top:1533.60px;width:1.80px;height:432.60px;background:#444;"></div>
<svg class="b" style="left:0;top:0" width="4532" height="2444"><path d="M2916.00 1560.50h45.32v6.77h-45.32zM2967.79 1560.50h12.95v6.77h-12.95zM2987.21 1560.50h6.47v6.77h-6.47zM3000.16 1560.50h6.47v6.77h-6.47zM3013.11 1560.50h6.47v6.77h-6.47zM3026.05 1560.50h6.47v6.77h-6.47zM3039.00 1560.50h6.47v6.77h-6.47zM3051.95 1560.50h25.89v6.77h-25.89zM3097.26 1560.50h6.47v6.77h-6.47zM3123.16 1560.50h19.42v6.77h-19.42zM3162.00 1560.50h6.47v6.77h-6.47zM3194.37 1560.50h6.47v6.77h-6.47zM3207.32 1560.50h6.47v6.77h-6.47zM3226.74 1560.50h6.47v6.77h-6.47zM3239.68 1560.50h45.32v6.77h-45.32zM2916.00 1566.97h6.47v6.77h-6.47zM2954.84 1566.97h6.47v6.77h-6.47zM2987.21 1566.97h6.47v6.77h-6.47zM3006.63 1566.97h12.95v6.77h-12.95zM3026.05 1566.97h6.47v6.77h-6.47zM3039.00 1566.97h6.47v6.77h-6.47zM3051.95 1566.97h6.47v6.77h-6.47zM3077.84 1566.97h12.95v6.77h-12.95zM3097.26 1566.97h19.42v6.77h-19.42zM3129.63 1566.97h25.89v6.77h-25.89zM3168.47 1566.97h6.47v6.77h-6.47zM3181.42 1566.97h6.47v6.77h-6.47zM3200.84 1566.97h12.95v6.77h-12.95zM3220.26 1566.97h12.95v6.77h-12.95zM3239.68 1566.97h6.47v6.77h-6.47zM3278.53 1566.97h6.47v6.77h-6.47zM2916.00 1573.45h6.47v6.77h-6.47zM2928.95 1573.45h19.42v6.77h-19.42zM2954.84 1573.45h6.47v6.77h-6.47zM2967.79 1573.45h6.47v6.77h-6.47zM3000.16 1573.45h19.42v6.77h-19.42zM3039.00 1573.45h12.95v6.77h-12.95zM3058.42 1573.45h6.47v6.77h-6.47zM3077.84 1573.45h19.42v6.77h-19.42zM3103.74 1573.45h25.89v6.77h-25.89zM3155.53 1573.45h6.47v6.77h-6.47zM3168.47 1573.45h25.89v6.77h-25.89zM3213.79 1573.45h12.95v6.77h-12.95zM3239.68 1573.45h6.47v6.77h-6.47zM3252.63 1573.45h19.42v6.77h-19.42zM3278.53 1573.45h6.47v6.77h-6.47zM2916.00 1579.92h6.47v6.77h-6.47zM2928.95 1579.92h19.42v6.77h-19.42zM2954.84 1579.92h6.47v6.77h-6.47zM2974.26 1579.92h6.47v6.77h-6.47zM2987.21 1579.92h6.47v6.77h-6.47zM3000.16 1579.92h6.47v6.77h-6.47zM3026.05 1579.92h6.47v6.77h-6.47zM3045.47 1579.92h6.47v6.77h-6.47zM3071.37 1579.92h19.42v6.77h-19.42zM3103.74 1579.92h6.47v6.77h-6.47zM3123.16 1579.92h25.89v6.77h-25.89zM3155.53 1579.92h6.47v6.77h-6.47zM3168.47 1579.92h12.95v6.77h-12.95zM3187.89 1579.92h12.95v6.77h-12.95zM3207.32 1579.92h25.89v6.77h-25.89zM3239.68 1579.92h6.47v6.77h-6.47zM3252.63 1579.92h19.42v6.77h-19.42zM3278.53 1579.92h6.47v6.77h-6.47zM2916.00 1586.39h6.47v6.77h-6.47zM2928.95 1586.39h19.42v6.77h-19.42zM2954.84 1586.39h6.47v6.77h-6.47zM2974.26 1586.39h12.95v6.77h-12.95zM3006.63 1586.39h19.42v6.77h-19.42zM3032.53 1586.39h12.95v6.77h-12.95zM3084.32 1586.39h38.84v6.77h-38.84zM3129.63 1586.39h25.89v6.77h-25.89zM3162.00 1586.39h6.47v6.77h-6.47zM3181.42 1586.39h6.47v6.77h-6.47zM3226.74 1586.39h6.47v6.77h-6.47zM3239.68 1586.39h6.47v6.77h-6.47zM3252.63 1586.39h19.42v6.77h-19.42zM3278.53 1586.39h6.47v6.77h-6.47zM2916.00 1592.87h6.47v6.77h-6.47zM2954.84 1592.87h6.47v6.77h-6.47zM2980.74 1592.87h12.95v6.77h-12.95zM3000.16 1592.87h25.89v6.77h-25.89zM3032.53 1592.87h6.47v6.77h-6.47zM3084.32 1592.87h6.47v6.77h-6.47zM3110.21 1592.87h12.95v6.77h-12.95zM3142.58 1592.87h38.84v6.77h-38.84zM3194.37 1592.87h6.47v6.77h-6.47zM3213.79 1592.87h19.42v6.77h-19.42zM3239.68 1592.87h6.47v6.77h-6.47zM3278.53 1592.87h6.47v6.77h-6.47zM2916.00 1599.34h45.32v6.77h-45.32zM2967.79 1599.34h6.47v6.77h-6.47zM2980.74 1599.34h6.47v6.77h-6.47zM2993.68 1599.34h6.47v6.77h-6.47zM3006.63 1599.34h6.47v6.77h-6.47zM3019.58 1599.34h6.47v6.77h-6.47zM3032.53 1599.34h6.47v6.77h-6.47zM3045.47 1599.34h6.47v6.77h-6.47zM3058.42 1599.34h6.47v6.77h-6.47zM3071.37 1599.34h6.47v6.77h-6.47zM3084.32 1599.34h6.47v6.77h-6.47zM3097.26 1599.34h6.47v6.77h-6.47zM3110.21 1599.34h6.47v6.77h-6.47zM3123.16 1599.34h6.47v6.77h-6.47zM3136.11 1599.34h6.47v6.77h-6.47zM3149.05 1599.34h6.47v6.77h-6.47zM3162.00 1599.34h6.47v6.77h-6.47zM3174.95 1599.34h6.47v6.77h-6.47zM3187.89 1599.34h6.47v6.77h-6.47zM3200.84 1599.34h6.47v6.77h-6.47zM3213.79 1599.34h6.47v6.77h-6.47zM3226.74 1599.34h6.47v6.77h-6.47zM3239.68 1599.34h45.32v6.77h-45.32zM2967.79 1605.82h12.95v6.77h-12.95zM2987.21 1605.82h6.47v6.77h-6.47zM3013.11 1605.82h12.95v6.77h-12.95zM3039.00 1605.82h6.47v6.77h-6.47zM3051.95 1605.82h6.47v6.77h-6.47zM3064.89 1605.82h25.89v6.77h-25.89zM3110.21 1605.82h6.47v6.77h-6.47zM3123.16 1605.82h19.42v6.77h-19.42zM3149.05 1605.82h6.47v6.77h-6.47zM3181.42 1605.82h6.47v6.77h-6.47zM3200.84 1605.82h25.89v6.77h-25.89zM2928.95 1612.29h32.37v6.77h-32.37zM2980.74 1612.29h12.95v6.77h-12.95zM3032.53 1612.29h25.89v6.77h-25.89zM3077.84 1612.29h38.84v6.77h-38.84zM3136.11 1612.29h6.47v6.77h-6.47zM3168.47 1612.29h12.95v6.77h-12.95zM3194.37 1612.29h12.95v6.77h-12.95zM3220.26 1612.29h6.47v6.77h-6.47zM3233.21 1612.29h6.47v6.77h-6.47zM3246.16 1612.29h6.47v6.77h-6.47zM3259.11 1612.29h6.47v6.77h-6.47zM3272.05 1612.29h6.47v6.77h-6.47zM2916.00 1618.76h38.84v6.77h-38.84zM2987.21 1618.76h12.95v6.77h-12.95zM3006.63 1618.76h6.47v6.77h-6.47zM3019.58 1618.76h19.42v6.77h-19.42zM3045.47 1618.76h6.47v6.77h-6.47zM3058.42 1618.76h6.47v6.77h-6.47zM3071.37 1618.76h32.37v6.77h-32.37zM3116.68 1618.76h32.37v6.77h-32.37zM3155.53 1618.76h19.42v6.77h-19.42zM3181.42 1618.76h38.84v6.77h-38.84zM3239.68 1618.76h12.95v6.77h-12.95zM3259.11 1618.76h6.47v6.77h-6.47zM2922.47 1625.24h38.84v6.77h-38.84zM2967.79 1625.24h19.42v6.77h-19.42zM2993.68 1625.24h6.47v6.77h-6.47zM3006.63 1625.24h19.42v6.77h-19.42zM3032.53 1625.24h6.47v6.77h-6.47zM3051.95 1625.24h19.42v6.77h-19.42zM3077.84 1625.24h6.47v6.77h-6.47zM3116.68 1625.24h12.95v6.77h-12.95zM3136.11 1625.24h6.47v6.77h-6.47zM3162.00 1625.24h6.47v6.77h-6.47zM3174.95 1625.24h19.42v6.77h-19.42zM3207.32 1625.24h19.42v6.77h-19.42zM3233.21 1625.24h6.47v6.77h-6.47zM3265.58 1625.24h6.47v6.77h-6.47zM2916.00 1631.71h12.95v6.77h-12.95zM2948.37 1631.71h6.47v6.77h-6.47zM2961.32 1631.71h12.95v6.77h-12.95zM3000.16 1631.71h12.95v6.77h-12.95zM3019.58 1631.71h6.47v6.77h-6.47zM3064.89 1631.71h12.95v6.77h-12.95zM3097.26 1631.71h25.89v6.77h-25.89zM3129.63 1631.71h12.95v6.77h-12.95zM3149.05 1631.71h6.47v6.77h-6.47zM3162.00 1631.71h32.37v6.77h-32.37zM3207.32 1631.71h6.47v6.77h-6.47zM3226.74 1631.71h12.95v6.77h-12.95zM3272.05 1631.71h12.95v6.77h-12.95zM2948.37 1638.18h12.95v6.77h-12.95zM2967.79 1638.18h12.95v6.77h-12.95zM3006.63 1638.18h12.95v6.77h-12.95zM3045.47 1638.18h12.95v6.77h-12.95zM3071.37 1638.18h6.47v6.77h-6.47zM3097.26 1638.18h6.47v6.77h-6.47zM3110.21 1638.18h12.95v6.77h-12.95zM3142.58 1638.18h6.47v6.77h-6.47zM3155.53 1638.18h12.95v6.77h-12.95zM3187.89 1638.18h12.95v6.77h-12.95zM3252.63 1638.18h6.47v6.77h-6.47zM3265.58 1638.18h6.47v6.77h-6.47zM2922.47 1644.66h32.37v6.77h-32.37zM2961.32 1644.66h12.95v6.77h-12.95zM2980.74 1644.66h6.47v6.77h-6.47zM3000.16 1644.66h6.47v6.77h-6.47zM3013.11 1644.66h19.42v6.77h-19.42zM3045.47 1644.66h6.47v6.77h-6.47zM3058.42 1644.66h12.95v6.77h-12.95zM3084.32 1644.66h6.47v6.77h-6.47zM3097.26 1644.66h6.47v6.77h-6.47zM3136.11 1644.66h19.42v6.77h-19.42zM3200.84 1644.66h6.47v6.77h-6.47zM3239.68 1644.66h38.84v6.77h-38.84zM2916.00 1651.13h6.47v6.77h-6.47zM2928.95 1651.13h12.95v6.77h-12.95zM2954.84 1651.13h19.42v6.77h-19.42zM2980.74 1651.13h38.84v6.77h-38.84zM3026.05 1651.13h19.42v6.77h-19.42zM3051.95 1651.13h6.47v6.77h-6.47zM3064.89 1651.13h6.47v6.77h-6.47zM3077.84 1651.13h6.47v6.77h-6.47zM3090.79 1651.13h6.47v6.77h-6.47zM3129.63 1651.13h6.47v6.77h-6.47zM3142.58 1651.13h6.47v6.77h-6.47zM3181.42 1651.13h6.47v6.77h-6.47zM3194.37 1651.13h19.42v6.77h-19.42zM3220.26 1651.13h12.95v6.77h-12.95zM3259.11 1651.13h25.89v6.77h-25.89zM2922.47 1657.61h6.47v6.77h-6.47zM2935.42 1657.61h6.47v6.77h-6.47zM2948.37 1657.61h6.47v6.77h-6.47zM2974.26 1657.61h19.42v6.77h-19.42zM3000.16 1657.61h19.42v6.77h-19.42zM3026.05 1657.61h12.95v6.77h-12.95zM3045.47 1657.61h25.89v6.77h-25.89zM3084.32 1657.61h6.47v6.77h-6.47zM3103.74 1657.61h6.47v6.77h-6.47zM3116.68 1657.61h6.47v6.77h-6.47zM3136.11 1657.61h25.89v6.77h-25.89zM3187.89 1657.61h19.42v6.77h-19.42zM3213.79 1657.61h6.47v6.77h-6.47zM3226.74 1657.61h19.42v6.77h-19.42zM3252.63 1657.61h12.95v6.77h-12.95zM3278.53 1657.61h6.47v6.77h-6.47zM2916.00 1664.08h6.47v6.77h-6.47zM2941.89 1664.08h6.47v6.77h-6.47zM2954.84 1664.08h6.47v6.77h-6.47zM2974.26 1664.08h6.47v6.77h-6.47zM2993.68 1664.08h25.89v6.77h-25.89zM3032.53 1664.08h25.89v6.77h-25.89zM3077.84 1664.08h6.47v6.77h-6.47zM3103.74 1664.08h6.47v6.77h-6.47zM3136.11 1664.08h6.47v6.77h-6.47zM3155.53 1664.08h19.42v6.77h-19.42zM3181.42 1664.08h25.89v6.77h-25.89zM3213.79 1664.08h12.95v6.77h-12.95zM3252.63 1664.08h19.42v6.77h-19.42zM2922.47 1670.55h32.37v6.77h-32.37zM2961.32 1670.55h6.47v6.77h-6.47zM2974.26 1670.55h12.95v6.77h-12.95zM2993.68 1670.55h6.47v6.77h-6.47zM3006.63 1670.55h6.47v6.77h-6.47zM3032.53 1670.55h6.47v6.77h-6.47zM3051.95 1670.55h6.47v6.77h-6.47zM3097.26 1670.55h6.47v6.77h-6.47zM3116.68 1670.55h6.47v6.77h-6.47zM3136.11 1670.55h6.47v6.77h-6.47zM3155.53 1670.55h12.95v6.77h-12.95zM3194.37 1670.55h6.47v6.77h-6.47zM3207.32 1670.55h6.47v6.77h-6.47zM3239.68 1670.55h6.47v6.77h-6.47zM3265.58 1670.55h6.47v6.77h-6.47zM3278.53 1670.55h6.47v6.77h-6.47zM2922.47 1677.03h6.47v6.77h-6.47zM2935.42 1677.03h45.32v6.77h-45.32zM2987.21 1677.03h19.42v6.77h-19.42zM3026.05 1677.03h12.95v6.77h-12.95zM3058.42 1677.03h6.47v6.77h-6.47zM3090.79 1677.03h32.37v6.77h-32.37zM3129.63 1677.03h6.47v6.77h-6.47zM3142.58 1677.03h6.47v6.77h-6.47zM3155.53 1677.03h12.95v6.77h-12.95zM3181.42 1677.03h12.95v6.77h-12.95zM3220.26 1677.03h6.47v6.77h-6.47zM3265.58 1677.03h6.47v6.77h-6.47zM3278.53 1677.03h6.47v6.77h-6.47zM2916.00 1683.50h12.95v6.77h-12.95zM2967.79 1683.50h6.47v6.77h-6.47zM2980.74 1683.50h6.47v6.77h-6.47zM2993.68 1683.50h6.47v6.77h-6.47zM3006.63 1683.50h6.47v6.77h-6.47zM3039.00 1683.50h32.37v6.77h-32.37zM3077.84 1683.50h19.42v6.77h-19.42zM3116.68 1683.50h19.42v6.77h-19.42zM3142.58 1683.50h12.95v6.77h-12.95zM3162.00 1683.50h6.47v6.77h-6.47zM3174.95 1683.50h19.42v6.77h-19.42zM3213.79 1683.50h19.42v6.77h-19.42zM3239.68 1683.50h12.95v6.77h-12.95zM3272.05 1683.50h6.47v6.77h-6.47zM2941.89 1689.97h6.47v6.77h-6.47zM2954.84 1689.97h6.47v6.77h-6.47zM2967.79 1689.97h19.42v6.77h-19.42zM3000.16 1689.97h12.95v6.77h-12.95zM3019.58 1689.97h6.47v6.77h-6.47zM3032.53 1689.97h6.47v6.77h-6.47zM3064.89 1689.97h25.89v6.77h-25.89zM3097.26 1689.97h6.47v6.77h-6.47zM3116.68 1689.97h12.95v6.77h-12.95zM3142.58 1689.97h6.47v6.77h-6.47zM3162.00 1689.97h25.89v6.77h-25.89zM3194.37 1689.97h19.42v6.77h-19.42zM3226.74 1689.97h19.42v6.77h-19.42zM3259.11 1689.97h19.42v6.77h-19.42zM2928.95 1696.45h19.42v6.77h-19.42zM2961.32 1696.45h19.42v6.77h-19.42zM2987.21 1696.45h6.47v6.77h-6.47zM3000.16 1696.45h6.47v6.77h-6.47zM3013.11 1696.45h6.47v6.77h-6.47zM3051.95 1696.45h12.95v6.77h-12.95zM3077.84 1696.45h25.89v6.77h-25.89zM3110.21 1696.45h6.47v6.77h-6.47zM3123.16 1696.45h12.95v6.77h-12.95zM3142.58 1696.45h32.37v6.77h-32.37zM3181.42 1696.45h19.42v6.77h-19.42zM3207.32 1696.45h19.42v6.77h-19.42zM3239.68 1696.45h12.95v6.77h-12.95zM3259.11 1696.45h6.47v6.77h-6.47zM3272.05 1696.45h12.95v6.77h-12.95zM2922.47 1702.92h38.84v6.77h-38.84zM2967.79 1702.92h6.47v6.77h-6.47zM2987.21 1702.92h6.47v6.77h-6.47zM3006.63 1702.92h25.89v6.77h-25.89zM3051.95 1702.92h12.95v6.77h-12.95zM3077.84 1702.92h19.42v6.77h-19.42zM3103.74 1702.92h45.32v6.77h-45.32zM3162.00 1702.92h6.47v6.77h-6.47zM3174.95 1702.92h32.37v6.77h-32.37zM3226.74 1702.92h25.89v6.77h-25.89zM3272.05 1702.92h6.47v6.77h-6.47zM2922.47 1709.39h6.47v6.77h-6.47zM2935.42 1709.39h19.42v6.77h-19.42zM2961.32 1709.39h12.95v6.77h-12.95zM3013.11 1709.39h12.95v6.77h-12.95zM3032.53 1709.39h19.42v6.77h-19.42zM3058.42 1709.39h12.95v6.77h-12.95zM3084.32 1709.39h19.42v6.77h-19.42zM3110.21 1709.39h6.47v6.77h-6.47zM3123.16 1709.39h12.95v6.77h-12.95zM3142.58 1709.39h6.47v6.77h-6.47zM3174.95 1709.39h19.42v6.77h-19.42zM3213.79 1709.39h12.95v6.77h-12.95zM3233.21 1709.39h6.47v6.77h-6.47zM3246.16 1709.39h6.47v6.77h-6.47zM3259.11 1709.39h6.47v6.77h-6.47zM3272.05 1709.39h6.47v6.77h-6.47zM2916.00 1715.87h6.47v6.77h-6.47zM2935.42 1715.87h6.47v6.77h-6.47zM2948.37 1715.87h12.95v6.77h-12.95zM2967.79 1715.87h6.47v6.77h-6.47zM2980.74 1715.87h19.42v6.77h-19.42zM3006.63 1715.87h32.37v6.77h-32.37zM3045.47 1715.87h6.47v6.77h-6.47zM3058.42 1715.87h19.42v6.77h-19.42zM3090.79 1715.87h6.47v6.77h-6.47zM3103.74 1715.87h12.95v6.77h-12.95zM3123.16 1715.87h12.95v6.77h-12.95zM3142.58 1715.87h6.47v6.77h-6.47zM3155.53 1715.87h12.95v6.77h-12.95zM3181.42 1715.87h32.37v6.77h-32.37zM3252.63 1715.87h32.37v6.77h-32.37zM2941.89 1722.34h12.95v6.77h-12.95zM2987.21 1722.34h6.47v6.77h-6.47zM3051.95 1722.34h6.47v6.77h-6.47zM3064.89 1722.34h6.47v6.77h-6.47zM3084.32 1722.34h6.47v6.77h-6.47zM3097.26 1722.34h25.89v6.77h-25.89zM3129.63 1722.34h6.47v6.77h-6.47zM3142.58 1722.34h12.95v6.77h-12.95zM3162.00 1722.34h12.95v6.77h-12.95zM3187.89 1722.34h19.42v6.77h-19.42zM3213.79 1722.34h6.47v6.77h-6.47zM3226.74 1722.34h6.47v6.77h-6.47zM3246.16 1722.34h6.47v6.77h-6.47zM3265.58 1722.34h12.95v6.77h-12.95zM2916.00 1728.82h6.47v6.77h-6.47zM2928.95 1728.82h6.47v6.77h-6.47zM2941.89 1728.82h38.84v6.77h-38.84zM2987.21 1728.82h19.42v6.77h-19.42zM3019.58 1728.82h6.47v6.77h-6.47zM3058.42 1728.82h12.95v6.77h-12.95zM3084.32 1728.82h38.84v6.77h-38.84zM3129.63 1728.82h19.42v6.77h-19.42zM3155.53 1728.82h19.42v6.77h-19.42zM3181.42 1728.82h19.42v6.77h-19.42zM3207.32 1728.82h77.68v6.77h-77.68zM2916.00 1735.29h6.47v6.77h-6.47zM2941.89 1735.29h6.47v6.77h-6.47zM2967.79 1735.29h12.95v6.77h-12.95zM3006.63 1735.29h6.47v6.77h-6.47zM3019.58 1735.29h12.95v6.77h-12.95zM3045.47 1735.29h6.47v6.77h-6.47zM3077.84 1735.29h12.95v6.77h-12.95zM3110.21 1735.29h6.47v6.77h-6.47zM3123.16 1735.29h6.47v6.77h-6.47zM3142.58 1735.29h6.47v6.77h-6.47zM3168.47 1735.29h19.42v6.77h-19.42zM3194.37 1735.29h12.95v6.77h-12.95zM3220.26 1735.29h12.95v6.77h-12.95zM3252.63 1735.29h25.89v6.77h-25.89zM2916.00 1741.76h6.47v6.77h-6.47zM2928.95 1741.76h19.42v6.77h-19.42zM2954.84 1741.76h6.47v6.77h-6.47zM2967.79 1741.76h6.47v6.77h-6.47zM2980.74 1741.76h32.37v6.77h-32.37zM3026.05 1741.76h12.95v6.77h-12.95zM3045.47 1741.76h12.95v6.77h-12.95zM3071.37 1741.76h6.47v6.77h-6.47zM3084.32 1741.76h6.47v6.77h-6.47zM3097.26 1741.76h6.47v6.77h-6.47zM3110.21 1741.76h6.47v6.77h-6.47zM3129.63 1741.76h6.47v6.77h-6.47zM3142.58 1741.76h6.47v6.77h-6.47zM3174.95 1741.76h6.47v6.77h-6.47zM3187.89 1741.76h12.95v6.77h-12.95zM3207.32 1741.76h25.89v6.77h-25.89zM3239.68 1741.76h6.47v6.77h-6.47zM3252.63 1741.76h19.42v6.77h-19.42zM3278.53 1741.76h6.47v6.77h-6.47zM2916.00 1748.24h6.47v6.77h-6.47zM2941.89 1748.24h6.47v6.77h-6.47zM2967.79 1748.24h6.47v6.77h-6.47zM3000.16 1748.24h12.95v6.77h-12.95zM3032.53 1748.24h6.47v6.77h-6.47zM3045.47 1748.24h12.95v6.77h-12.95zM3064.89 1748.24h6.47v6.77h-6.47zM3077.84 1748.24h12.95v6.77h-12.95zM3110.21 1748.24h6.47v6.77h-6.47zM3123.16 1748.24h12.95v6.77h-12.95zM3142.58 1748.24h6.47v6.77h-6.47zM3155.53 1748.24h12.95v6.77h-12.95zM3174.95 1748.24h19.42v6.77h-19.42zM3207.32 1748.24h12.95v6.77h-12.95zM3226.74 1748.24h6.47v6.77h-6.47zM3252.63 1748.24h6.47v6.77h-6.47zM3265.58 1748.24h6.47v6.77h-6.47zM2922.47 1754.71h51.79v6.77h-51.79zM2980.74 1754.71h6.47v6.77h-6.47zM3013.11 1754.71h6.47v6.77h-6.47zM3032.53 1754.71h12.95v6.77h-12.95zM3064.89 1754.71h6.47v6.77h-6.47zM3084.32 1754.71h32.37v6.77h-32.37zM3142.58 1754.71h6.47v6.77h-6.47zM3155.53 1754.71h6.47v6.77h-6.47zM3181.42 1754.71h25.89v6.77h-25.89zM3213.79 1754.71h6.47v6.77h-6.47zM3226.74 1754.71h45.32v6.77h-45.32zM2916.00 1761.18h6.47v6.77h-6.47zM2935.42 1761.18h12.95v6.77h-12.95zM2967.79 1761.18h6.47v6.77h-6.47zM2980.74 1761.18h12.95v6.77h-12.95zM3013.11 1761.18h6.47v6.77h-6.47zM3039.00 1761.18h12.95v6.77h-12.95zM3058.42 1761.18h6.47v6.77h-6.47zM3077.84 1761.18h19.42v6.77h-19.42zM3110.21 1761.18h6.47v6.77h-6.47zM3123.16 1761.18h12.95v6.77h-12.95zM3155.53 1761.18h6.47v6.77h-6.47zM3168.47 1761.18h19.42v6.77h-19.42zM3194.37 1761.18h6.47v6.77h-6.47zM3207.32 1761.18h12.95v6.77h-12.95zM3246.16 1761.18h6.47v6.77h-6.47zM3272.05 1761.18h6.47v6.77h-6.47zM2916.00 1767.66h6.47v6.77h-6.47zM2928.95 1767.66h12.95v6.77h-12.95zM2954.84 1767.66h19.42v6.77h-19.42zM2980.74 1767.66h6.47v6.77h-6.47zM2993.68 1767.66h12.95v6.77h-12.95zM3013.11 1767.66h6.47v6.77h-6.47zM3026.05 1767.66h6.47v6.77h-6.47zM3039.00 1767.66h6.47v6.77h-6.47zM3051.95 1767.66h19.42v6.77h-19.42zM3077.84 1767.66h38.84v6.77h-38.84zM3129.63 1767.66h6.47v6.77h-6.47zM3162.00 1767.66h12.95v6.77h-12.95zM3181.42 1767.66h6.47v6.77h-6.47zM3194.37 1767.66h6.47v6.77h-6.47zM3207.32 1767.66h25.89v6.77h-25.89zM3246.16 1767.66h6.47v6.77h-6.47zM3259.11 1767.66h6.47v6.77h-6.47zM3278.53 1767.66h6.47v6.77h-6.47zM2916.00 1774.13h6.47v6.77h-6.47zM2935.42 1774.13h6.47v6.77h-6.47zM2948.37 1774.13h6.47v6.77h-6.47zM2961.32 1774.13h6.47v6.77h-6.47zM2987.21 1774.13h6.47v6.77h-6.47zM3000.16 1774.13h6.47v6.77h-6.47zM3013.11 1774.13h12.95v6.77h-12.95zM3039.00 1774.13h32.37v6.77h-32.37zM3077.84 1774.13h32.37v6.77h-32.37zM3116.68 1774.13h6.47v6.77h-6.47zM3142.58 1774.13h12.95v6.77h-12.95zM3181.42 1774.13h12.95v6.77h-12.95zM3200.84 1774.13h19.42v6.77h-19.42zM3226.74 1774.13h12.95v6.77h-12.95zM3246.16 1774.13h12.95v6.77h-12.95zM3265.58 1774.13h6.47v6.77h-6.47zM3278.53 1774.13h6.47v6.77h-6.47zM2922.47 1780.61h6.47v6.77h-6.47zM2941.89 1780.61h19.42v6.77h-19.42zM2967.79 1780.61h12.95v6.77h-12.95zM2987.21 1780.61h6.47v6.77h-6.47zM3000.16 1780.61h6.47v6.77h-6.47zM3013.11 1780.61h6.47v6.77h-6.47zM3026.05 1780.61h12.95v6.77h-12.95zM3045.47 1780.61h6.47v6.77h-6.47zM3058.42 1780.61h19.42v6.77h-19.42zM3084.32 1780.61h38.84v6.77h-38.84zM3136.11 1780.61h12.95v6.77h-12.95zM3155.53 1780.61h6.47v6.77h-6.47zM3168.47 1780.61h6.47v6.77h-6.47zM3181.42 1780.61h19.42v6.77h-19.42zM3213.79 1780.61h12.95v6.77h-12.95zM3233.21 1780.61h25.89v6.77h-25.89zM3265.58 1780.61h6.47v6.77h-6.47zM2916.00 1787.08h6.47v6.77h-6.47zM2948.37 1787.08h6.47v6.77h-6.47zM2967.79 1787.08h12.95v6.77h-12.95zM2993.68 1787.08h6.47v6.77h-6.47zM3019.58 1787.08h6.47v6.77h-6.47zM3039.00 1787.08h6.47v6.77h-6.47zM3071.37 1787.08h6.47v6.77h-6.47zM3103.74 1787.08h12.95v6.77h-12.95zM3129.63 1787.08h25.89v6.77h-25.89zM3162.00 1787.08h6.47v6.77h-6.47zM3200.84 1787.08h12.95v6.77h-12.95zM3233.21 1787.08h12.95v6.77h-12.95zM3252.63 1787.08h32.37v6.77h-32.37zM2916.00 1793.55h6.47v6.77h-6.47zM2941.89 1793.55h25.89v6.77h-25.89zM2974.26 1793.55h6.47v6.77h-6.47zM2987.21 1793.55h6.47v6.77h-6.47zM3000.16 1793.55h6.47v6.77h-6.47zM3026.05 1793.55h6.47v6.77h-6.47zM3045.47 1793.55h6.47v6.77h-6.47zM3084.32 1793.55h12.95v6.77h-12.95zM3110.21 1793.55h25.89v6.77h-25.89zM3142.58 1793.55h6.47v6.77h-6.47zM3174.95 1793.55h6.47v6.77h-6.47zM3187.89 1793.55h6.47v6.77h-6.47zM3200.84 1793.55h6.47v6.77h-6.47zM3220.26 1793.55h19.42v6.77h-19.42zM3259.11 1793.55h12.95v6.77h-12.95zM3278.53 1793.55h6.47v6.77h-6.47zM2928.95 1800.03h6.47v6.77h-6.47zM2941.89 1800.03h6.47v6.77h-6.47zM2987.21 1800.03h25.89v6.77h-25.89zM3019.58 1800.03h6.47v6.77h-6.47zM3032.53 1800.03h25.89v6.77h-25.89zM3071.37 1800.03h6.47v6.77h-6.47zM3084.32 1800.03h6.47v6.77h-6.47zM3123.16 1800.03h6.47v6.77h-6.47zM3136.11 1800.03h12.95v6.77h-12.95zM3168.47 1800.03h12.95v6.77h-12.95zM3220.26 1800.03h12.95v6.77h-12.95zM3239.68 1800.03h6.47v6.77h-6.47zM3259.11 1800.03h6.47v6.77h-6.47zM3278.53 1800.03h6.47v6.77h-6.47zM2916.00 1806.50h12.95v6.77h-12.95zM2941.89 1806.50h6.47v6.77h-6.47zM2954.84 1806.50h19.42v6.77h-19.42zM2980.74 1806.50h12.95v6.77h-12.95zM3000.16 1806.50h6.47v6.77h-6.47zM3013.11 1806.50h6.47v6.77h-6.47zM3039.00 1806.50h12.95v6.77h-12.95zM3064.89 1806.50h12.95v6.77h-12.95zM3084.32 1806.50h6.47v6.77h-6.47zM3097.26 1806.50h45.32v6.77h-45.32zM3149.05 1806.50h12.95v6.77h-12.95zM3194.37 1806.50h6.47v6.77h-6.47zM3207.32 1806.50h6.47v6.77h-6.47zM3233.21 1806.50h6.47v6.77h-6.47zM3246.16 1806.50h12.95v6.77h-12.95zM3265.58 1806.50h19.42v6.77h-19.42zM2916.00 1812.97h6.47v6.77h-6.47zM2935.42 1812.97h6.47v6.77h-6.47zM2948.37 1812.97h6.47v6.77h-6.47zM2961.32 1812.97h6.47v6.77h-6.47zM2987.21 1812.97h12.95v6.77h-12.95zM3019.58 1812.97h6.47v6.77h-6.47zM3032.53 1812.97h19.42v6.77h-19.42zM3064.89 1812.97h12.95v6.77h-12.95zM3084.32 1812.97h25.89v6.77h-25.89zM3136.11 1812.97h6.47v6.77h-6.47zM3162.00 1812.97h6.47v6.77h-6.47zM3187.89 1812.97h6.47v6.77h-6.47zM3200.84 1812.97h6.47v6.77h-6.47zM3226.74 1812.97h6.47v6.77h-6.47zM3265.58 1812.97h19.42v6.77h-19.42zM2916.00 1819.45h12.95v6.77h-12.95zM2941.89 1819.45h38.84v6.77h-38.84zM2987.21 1819.45h6.47v6.77h-6.47zM3006.63 1819.45h6.47v6.77h-6.47zM3019.58 1819.45h6.47v6.77h-6.47zM3039.00 1819.45h6.47v6.77h-6.47zM3058.42 1819.45h32.37v6.77h-32.37zM3110.21 1819.45h38.84v6.77h-38.84zM3155.53 1819.45h6.47v6.77h-6.47zM3168.47 1819.45h12.95v6.77h-12.95zM3207.32 1819.45h6.47v6.77h-6.47zM3220.26 1819.45h6.47v6.77h-6.47zM3233.21 1819.45h12.95v6.77h-12.95zM3252.63 1819.45h12.95v6.77h-12.95zM3272.05 1819.45h12.95v6.77h-12.95zM2941.89 1825.92h6.47v6.77h-6.47zM2967.79 1825.92h6.47v6.77h-6.47zM2987.21 1825.92h6.47v6.77h-6.47zM3019.58 1825.92h12.95v6.77h-12.95zM3045.47 1825.92h6.47v6.77h-6.47zM3058.42 1825.92h6.47v6.77h-6.47zM3077.84 1825.92h45.32v6.77h-45.32zM3129.63 1825.92h25.89v6.77h-25.89zM3168.47 1825.92h12.95v6.77h-12.95zM3207.32 1825.92h6.47v6.77h-6.47zM3220.26 1825.92h6.47v6.77h-6.47zM3233.21 1825.92h6.47v6.77h-6.47zM3252.63 1825.92h6.47v6.77h-6.47zM3278.53 1825.92h6.47v6.77h-6.47zM2922.47 1832.39h12.95v6.77h-12.95zM2948.37 1832.39h25.89v6.77h-25.89zM2987.21 1832.39h6.47v6.77h-6.47zM3006.63 1832.39h6.47v6.77h-6.47zM3019.58 1832.39h12.95v6.77h-12.95zM3039.00 1832.39h6.47v6.77h-6.47zM3051.95 1832.39h6.47v6.77h-6.47zM3097.26 1832.39h32.37v6.77h-32.37zM3136.11 1832.39h12.95v6.77h-12.95zM3155.53 1832.39h19.42v6.77h-19.42zM3187.89 1832.39h6.47v6.77h-6.47zM3200.84 1832.39h19.42v6.77h-19.42zM3233.21 1832.39h6.47v6.77h-6.47zM3246.16 1832.39h12.95v6.77h-12.95zM3272.05 1832.39h6.47v6.77h-6.47zM2916.00 1838.87h19.42v6.77h-19.42zM2961.32 1838.87h12.95v6.77h-12.95zM2987.21 1838.87h6.47v6.77h-6.47zM3006.63 1838.87h6.47v6.77h-6.47zM3026.05 1838.87h6.47v6.77h-6.47zM3039.00 1838.87h6.47v6.77h-6.47zM3071.37 1838.87h6.47v6.77h-6.47zM3084.32 1838.87h6.47v6.77h-6.47zM3097.26 1838.87h6.47v6.77h-6.47zM3116.68 1838.87h6.47v6.77h-6.47zM3142.58 1838.87h12.95v6.77h-12.95zM3174.95 1838.87h6.47v6.77h-6.47zM3194.37 1838.87h6.47v6.77h-6.47zM3213.79 1838.87h6.47v6.77h-6.47zM3239.68 1838.87h12.95v6.77h-12.95zM3278.53 1838.87h6.47v6.77h-6.47zM2941.89 1845.34h6.47v6.77h-6.47zM2954.84 1845.34h6.47v6.77h-6.47zM2974.26 1845.34h6.47v6.77h-6.47zM2987.21 1845.34h19.42v6.77h-19.42zM3019.58 1845.34h12.95v6.77h-12.95zM3045.47 1845.34h6.47v6.77h-6.47zM3064.89 1845.34h25.89v6.77h-25.89zM3116.68 1845.34h12.95v6.77h-12.95zM3149.05 1845.34h6.47v6.77h-6.47zM3162.00 1845.34h12.95v6.77h-12.95zM3181.42 1845.34h6.47v6.77h-6.47zM3194.37 1845.34h12.95v6.77h-12.95zM3226.74 1845.34h6.47v6.77h-6.47zM3239.68 1845.34h19.42v6.77h-19.42zM3265.58 1845.34h6.47v6.77h-6.47zM2922.47 1851.82h12.95v6.77h-12.95zM2961.32 1851.82h6.47v6.77h-6.47zM2980.74 1851.82h6.47v6.77h-6.47zM3000.16 1851.82h6.47v6.77h-6.47zM3026.05 1851.82h6.47v6.77h-6.47zM3051.95 1851.82h6.47v6.77h-6.47zM3071.37 1851.82h6.47v6.77h-6.47zM3084.32 1851.82h25.89v6.77h-25.89zM3123.16 1851.82h6.47v6.77h-6.47zM3136.11 1851.82h12.95v6.77h-12.95zM3162.00 1851.82h19.42v6.77h-19.42zM3213.79 1851.82h19.42v6.77h-19.42zM3239.68 1851.82h6.47v6.77h-6.47zM3252.63 1851.82h12.95v6.77h-12.95zM3272.05 1851.82h12.95v6.77h-12.95zM2928.95 1858.29h32.37v6.77h-32.37zM2974.26 1858.29h6.47v6.77h-6.47zM3000.16 1858.29h19.42v6.77h-19.42zM3039.00 1858.29h6.47v6.77h-6.47zM3051.95 1858.29h19.42v6.77h-19.42zM3077.84 1858.29h6.47v6.77h-6.47zM3103.74 1858.29h32.37v6.77h-32.37zM3142.58 1858.29h19.42v6.77h-19.42zM3174.95 1858.29h25.89v6.77h-25.89zM3207.32 1858.29h6.47v6.77h-6.47zM3259.11 1858.29h19.42v6.77h-19.42zM2928.95 1864.76h6.47v6.77h-6.47zM2941.89 1864.76h12.95v6.77h-12.95zM2980.74 1864.76h12.95v6.77h-12.95zM3000.16 1864.76h12.95v6.77h-12.95zM3026.05 1864.76h32.37v6.77h-32.37zM3084.32 1864.76h6.47v6.77h-6.47zM3116.68 1864.76h19.42v6.77h-19.42zM3142.58 1864.76h19.42v6.77h-19.42zM3168.47 1864.76h6.47v6.77h-6.47zM3181.42 1864.76h25.89v6.77h-25.89zM3220.26 1864.76h6.47v6.77h-6.47zM3233.21 1864.76h6.47v6.77h-6.47zM3252.63 1864.76h6.47v6.77h-6.47zM3272.05 1864.76h12.95v6.77h-12.95zM2935.42 1871.24h12.95v6.77h-12.95zM2954.84 1871.24h6.47v6.77h-6.47zM2987.21 1871.24h25.89v6.77h-25.89zM3019.58 1871.24h32.37v6.77h-32.37zM3058.42 1871.24h6.47v6.77h-6.47zM3084.32 1871.24h32.37v6.77h-32.37zM3129.63 1871.24h12.95v6.77h-12.95zM3149.05 1871.24h25.89v6.77h-25.89zM3200.84 1871.24h19.42v6.77h-19.42zM3226.74 1871.24h38.84v6.77h-38.84zM2974.26 1877.71h38.84v6.77h-38.84zM3032.53 1877.71h6.47v6.77h-6.47zM3051.95 1877.71h6.47v6.77h-6.47zM3064.89 1877.71h12.95v6.77h-12.95zM3084.32 1877.71h6.47v6.77h-6.47zM3110.21 1877.71h6.47v6.77h-6.47zM3129.63 1877.71h25.89v6.77h-25.89zM3194.37 1877.71h12.95v6.77h-12.95zM3226.74 1877.71h6.47v6.77h-6.47zM3252.63 1877.71h6.47v6.77h-6.47zM2916.00 1884.18h45.32v6.77h-45.32zM2967.79 1884.18h6.47v6.77h-6.47zM2980.74 1884.18h6.47v6.77h-6.47zM3000.16 1884.18h6.47v6.77h-6.47zM3019.58 1884.18h6.47v6.77h-6.47zM3032.53 1884.18h25.89v6.77h-25.89zM3071.37 1884.18h19.42v6.77h-19.42zM3097.26 1884.18h6.47v6.77h-6.47zM3110.21 1884.18h32.37v6.77h-32.37zM3149.05 1884.18h19.42v6.77h-19.42zM3174.95 1884.18h12.95v6.77h-12.95zM3226.74 1884.18h6.47v6.77h-6.47zM3239.68 1884.18h6.47v6.77h-6.47zM3252.63 1884.18h6.47v6.77h-6.47zM3278.53 1884.18h6.47v6.77h-6.47zM2916.00 1890.66h6.47v6.77h-6.47zM2954.84 1890.66h6.47v6.77h-6.47zM2974.26 1890.66h25.89v6.77h-25.89zM3051.95 1890.66h6.47v6.77h-6.47zM3064.89 1890.66h25.89v6.77h-25.89zM3110.21 1890.66h12.95v6.77h-12.95zM3142.58 1890.66h6.47v6.77h-6.47zM3155.53 1890.66h19.42v6.77h-19.42zM3194.37 1890.66h38.84v6.77h-38.84zM3252.63 1890.66h6.47v6.77h-6.47zM3265.58 1890.66h6.47v6.77h-6.47zM3278.53 1890.66h6.47v6.77h-6.47zM2916.00 1897.13h6.47v6.77h-6.47zM2928.95 1897.13h19.42v6.77h-19.42zM2954.84 1897.13h6.47v6.77h-6.47zM2980.74 1897.13h6.47v6.77h-6.47zM2993.68 1897.13h12.95v6.77h-12.95zM3013.11 1897.13h19.42v6.77h-19.42zM3051.95 1897.13h12.95v6.77h-12.95zM3071.37 1897.13h45.32v6.77h-45.32zM3149.05 1897.13h12.95v6.77h-12.95zM3174.95 1897.13h6.47v6.77h-6.47zM3187.89 1897.13h25.89v6.77h-25.89zM3220.26 1897.13h45.32v6.77h-45.32zM3272.05 1897.13h6.47v6.77h-6.47zM2916.00 1903.61h6.47v6.77h-6.47zM2928.95 1903.61h19.42v6.77h-19.42zM2954.84 1903.61h6.47v6.77h-6.47zM2974.26 1903.61h12.95v6.77h-12.95zM2993.68 1903.61h6.47v6.77h-6.47zM3032.53 1903.61h6.47v6.77h-6.47zM3051.95 1903.61h12.95v6.77h-12.95zM3090.79 1903.61h32.37v6.77h-32.37zM3136.11 1903.61h12.95v6.77h-12.95zM3162.00 1903.61h32.37v6.77h-32.37zM3213.79 1903.61h12.95v6.77h-12.95zM3239.68 1903.61h19.42v6.77h-19.42zM2916.00 1910.08h6.47v6.77h-6.47zM2928.95 1910.08h19.42v6.77h-19.42zM2954.84 1910.08h6.47v6.77h-6.47zM2993.68 1910.08h12.95v6.77h-12.95zM3019.58 1910.08h12.95v6.77h-12.95zM3039.00 1910.08h12.95v6.77h-12.95zM3058.42 1910.08h25.89v6.77h-25.89zM3090.79 1910.08h12.95v6.77h-12.95zM3110.21 1910.08h6.47v6.77h-6.47zM3123.16 1910.08h12.95v6.77h-12.95zM3142.58 1910.08h6.47v6.77h-6.47zM3155.53 1910.08h6.47v6.77h-6.47zM3168.47 1910.08h6.47v6.77h-6.47zM3187.89 1910.08h6.47v6.77h-6.47zM3200.84 1910.08h6.47v6.77h-6.47zM3226.74 1910.08h12.95v6.77h-12.95zM3246.16 1910.08h6.47v6.77h-6.47zM3265.58 1910.08h6.47v6.77h-6.47zM2916.00 1916.55h6.47v6.77h-6.47zM2954.84 1916.55h6.47v6.77h-6.47zM2967.79 1916.55h6.47v6.77h-6.47zM3000.16 1916.55h6.47v6.77h-6.47zM3013.11 1916.55h12.95v6.77h-12.95zM3032.53 1916.55h12.95v6.77h-12.95zM3058.42 1916.55h6.47v6.77h-6.47zM3071.37 1916.55h6.47v6.77h-6.47zM3084.32 1916.55h6.47v6.77h-6.47zM3097.26 1916.55h12.95v6.77h-12.95zM3116.68 1916.55h19.42v6.77h-19.42zM3149.05 1916.55h6.47v6.77h-6.47zM3162.00 1916.55h6.47v6.77h-6.47zM3181.42 1916.55h12.95v6.77h-12.95zM3200.84 1916.55h12.95v6.77h-12.95zM3220.26 1916.55h12.95v6.77h-12.95zM3239.68 1916.55h19.42v6.77h-19.42zM3265.58 1916.55h19.42v6.77h-19.42zM2916.00 1923.03h45.32v6.77h-45.32zM2980.74 1923.03h12.95v6.77h-12.95zM3013.11 1923.03h25.89v6.77h-25.89zM3051.95 1923.03h6.47v6.77h-6.47zM3064.89 1923.03h12.95v6.77h-12.95zM3090.79 1923.03h6.47v6.77h-6.47zM3103.74 1923.03h12.95v6.77h-12.95zM3142.58 1923.03h12.95v6.77h-12.95zM3162.00 1923.03h6.47v6.77h-6.47zM3187.89 1923.03h6.47v6.77h-6.47zM3207.32 1923.03h51.79v6.77h-51.79z" fill="#000"/>
<rect x="3072.5" y="1717.0" width="56" height="56" fill="#fff"/><rect x="3076.5" y="1721.0" width="48" height="48" fill="#000"/>
<path d="M3086.5 1741.0h10v-10h8v10h10v8h-10v10h-8v-10h-10z" fill="#fff"/></svg>
<div class="t" style="left:2664.00px;top:1535.93px;font-size:21.70px;line-height:21.70px;color:#262626;transform:scaleX(0.9653);transform-origin:0 0;">Récépissé</div>
<div class="t" style="left:2917.00px;top:1535.93px;font-size:21.70px;line-height:21.70px;color:#262626;transform:scaleX(1.0288);transform-origin:0 0;">Section paiement</div>
<div class="t" style="left:3305.90px;top:1535.13px;font-size:21.70px;line-height:21.70px;color:#262626;transform:scaleX(1.0430);transform-origin:0 0;">Compte / Payable à</div>
<div class="t" style="left:2664.00px;top:1561.46px;font-size:16.00px;line-height:16.00px;color:#1e1e1e;font-weight:700;transform:scaleX(0.9798);transform-origin:0 0;">Compte / Payable à</div>
<div class="t" style="left:2664.00px;top:1582.03px;font-size:13.20px;line-height:13.20px;color:#1e1e1e;transform:scaleX(1.1947);transform-origin:0 0;">CH 34 3000 0001 1000 0031 7</div>
<div class="t" style="left:2664.00px;top:1599.18px;font-size:15.50px;line-height:15.50px;color:#1e1e1e;transform:scaleX(1.0338);transform-origin:0 0;">Vaudoise Generale</div>
<div class="t" style="left:2664.00px;top:1618.28px;font-size:15.50px;line-height:15.50px;color:#1e1e1e;transform:scaleX(1.0535);transform-origin:0 0;">Case Postale 120</div>
<div class="t" style="left:2664.00px;top:1638.38px;font-size:15.50px;line-height:15.50px;color:#1e1e1e;transform:scaleX(1.0787);transform-origin:0 0;">1001 Lausanne</div>
<div class="t" style="left:2664.00px;top:1676.16px;font-size:16.00px;line-height:16.00px;color:#1e1e1e;font-weight:700;transform:scaleX(0.9202);transform-origin:0 0;">Référence</div>
<div class="t" style="left:2664.00px;top:1695.07px;font-size:11.50px;line-height:11.50px;color:#1e1e1e;transform:scaleX(1.2069);transform-origin:0 0;">00 00002 23424 36292 04000 44491</div>
<div class="t" style="left:2664.00px;top:1730.16px;font-size:16.00px;line-height:16.00px;color:#1e1e1e;font-weight:700;transform:scaleX(0.9597);transform-origin:0 0;">Payable par</div>
<div class="t" style="left:2664.00px;top:1750.08px;font-size:15.50px;line-height:15.50px;color:#1e1e1e;transform:scaleX(1.0143);transform-origin:0 0;">Paul Gosselin</div>
<div class="t" style="left:2664.00px;top:1769.48px;font-size:15.50px;line-height:15.50px;color:#1e1e1e;transform:scaleX(1.0516);transform-origin:0 0;">Avenue des Bouveresses 24</div>
<div class="t" style="left:2664.00px;top:1788.88px;font-size:15.50px;line-height:15.50px;color:#1e1e1e;transform:scaleX(1.0787);transform-origin:0 0;">1010 Lausanne</div>
<div class="t" style="left:3305.90px;top:1561.46px;font-size:16.00px;line-height:16.00px;color:#1e1e1e;font-weight:700;transform:scaleX(0.9866);transform-origin:0 0;">Compte / Payable à</div>
<div class="t" style="left:3305.90px;top:1581.80px;font-size:15.00px;line-height:15.00px;color:#1e1e1e;transform:scaleX(1.2161);transform-origin:0 0;">CH 34 3000 0001 1000 0031 7</div>
<div class="t" style="left:3305.90px;top:1600.88px;font-size:15.50px;line-height:15.50px;color:#1e1e1e;transform:scaleX(1.0513);transform-origin:0 0;">Vaudoise Generale</div>
<div class="t" style="left:3305.90px;top:1620.28px;font-size:15.50px;line-height:15.50px;color:#1e1e1e;transform:scaleX(1.0625);transform-origin:0 0;">Case Postale 120</div>
<div class="t" style="left:3305.90px;top:1639.78px;font-size:15.50px;line-height:15.50px;color:#1e1e1e;transform:scaleX(1.0909);transform-origin:0 0;">1001 Lausanne</div>
<div class="t" style="left:3305.90px;top:1678.16px;font-size:16.00px;line-height:16.00px;color:#1e1e1e;font-weight:700;transform:scaleX(0.9344);transform-origin:0 0;">Référence</div>
<div class="t" style="left:3305.90px;top:1697.84px;font-size:12.00px;line-height:12.00px;color:#1e1e1e;transform:scaleX(1.1633);transform-origin:0 0;">00 00002 23424 36292 04000 44491</div>
<div class="t" style="left:3305.90px;top:1731.16px;font-size:16.00px;line-height:16.00px;color:#1e1e1e;font-weight:700;transform:scaleX(0.9619);transform-origin:0 0;">Payable par</div>
<div class="t" style="left:3305.90px;top:1750.98px;font-size:15.50px;line-height:15.50px;color:#1e1e1e;transform:scaleX(1.0279);transform-origin:0 0;">Paul Gosselin</div>
<div class="t" style="left:3305.90px;top:1770.48px;font-size:15.50px;line-height:15.50px;color:#1e1e1e;transform:scaleX(1.0526);transform-origin:0 0;">Avenue des Bouveresses 24</div>
<div class="t" style="left:3305.90px;top:1789.88px;font-size:15.50px;line-height:15.50px;color:#1e1e1e;transform:scaleX(1.0909);transform-origin:0 0;">1010 Lausanne</div>
<div class="t" style="left:2663.80px;top:1928.28px;font-size:15.50px;line-height:15.50px;color:#1e1e1e;transform:scaleX(1.0528);transform-origin:0 0;">Monnaie</div>
<div class="t" style="left:2789.00px;top:1928.28px;font-size:15.50px;line-height:15.50px;color:#1e1e1e;transform:scaleX(1.0803);transform-origin:0 0;">Montant</div>
<div class="t" style="left:2663.80px;top:1947.68px;font-size:15.50px;line-height:15.50px;color:#1e1e1e;transform:scaleX(0.9732);transform-origin:0 0;">CHF</div>
<div class="t" style="left:2790.00px;top:1947.68px;font-size:15.50px;line-height:15.50px;color:#1e1e1e;transform:scaleX(1.1652);transform-origin:0 0;">1’292.60</div>
<div class="t" style="left:2917.00px;top:1928.28px;font-size:15.50px;line-height:15.50px;color:#1e1e1e;transform:scaleX(1.0528);transform-origin:0 0;">Monnaie</div>
<div class="t" style="left:3089.50px;top:1928.28px;font-size:15.50px;line-height:15.50px;color:#1e1e1e;transform:scaleX(1.0803);transform-origin:0 0;">Montant</div>
<div class="t" style="left:2917.00px;top:1947.68px;font-size:15.50px;line-height:15.50px;color:#1e1e1e;transform:scaleX(0.9732);transform-origin:0 0;">CHF</div>
<div class="t" style="left:3090.50px;top:1947.68px;font-size:15.50px;line-height:15.50px;color:#1e1e1e;transform:scaleX(1.1652);transform-origin:0 0;">1’292.60</div>
<div class="b" style="left:3957.70px;top:52.00px;width:572.30px;height:2362.30px;background:#f1f1f1;"></div>
<div class="t" style="left:3986.50px;top:99.00px;font-size:44.30px;line-height:44.30px;color:#ef7d2d;transform:scaleX(1.0185);transform-origin:0 0;">Paiements</div>
<svg class="b" style="left:4366px;top:112px" width="30" height="30" viewBox="4366 112 30 30">
<path d="M4381 117 L4391.5 127 L4389 128.5 L4385 126.5 L4381.5 131 L4383 134.5 L4381 136 L4377 131.5 L4370 137 L4375.5 130 L4371 126 L4372.5 124 L4376 125.5 L4380.5 122 L4379 118.5 Z" fill="#7b7b7b"/>
</svg>
<div class="t" style="left:4448.30px;top:112.66px;font-size:31.00px;line-height:31.00px;color:#7f8185;transform:scaleX(0.9059);transform-origin:0 0;">Aa aA</div>
<div class="b" style="left:3957.70px;top:259.30px;width:571.30px;height:2.20px;background:#767676;"></div>
<div class="b" style="left:3957.70px;top:326.50px;width:571.30px;height:2.20px;background:#767676;"></div>
<div class="b" style="left:3957.70px;top:394.00px;width:571.30px;height:2.20px;background:#767676;"></div>
<div class="b" style="left:3957.70px;top:461.00px;width:571.30px;height:2.20px;background:#767676;"></div>
<div class="b" style="left:3957.70px;top:528.00px;width:571.30px;height:2.20px;background:#767676;"></div>
<div class="b" style="left:3957.70px;top:595.00px;width:571.30px;height:2.20px;background:#767676;"></div>
<div class="b" style="left:3957.70px;top:662.50px;width:571.30px;height:2.20px;background:#767676;"></div>
<div class="b" style="left:3957.70px;top:729.00px;width:571.30px;height:2.20px;background:#767676;"></div>
<div class="b" style="left:3993.00px;top:284.10px;width:9.50px;height:9.50px;background:#ee7722;"></div>
<div class="t" style="left:4038.00px;top:274.92px;font-size:32.70px;line-height:32.70px;color:#f08a50;transform:scaleX(0.8705);transform-origin:0 0;">Registre</div>
<div class="b" style="left:3993.00px;top:351.40px;width:9.50px;height:9.50px;background:#ee7722;"></div>
<div class="t" style="left:4038.00px;top:342.22px;font-size:32.70px;line-height:32.70px;color:#45474d;transform:scaleX(0.9108);transform-origin:0 0;">A payer</div>
<div class="b" style="left:3993.00px;top:418.70px;width:9.50px;height:9.50px;background:#ee7722;"></div>
<div class="t" style="left:4038.00px;top:409.52px;font-size:32.70px;line-height:32.70px;color:#45474d;transform:scaleX(0.9278);transform-origin:0 0;">A comptabiliser [G]</div>
<div class="b" style="left:3993.00px;top:486.00px;width:9.50px;height:9.50px;background:#ee7722;"></div>
<div class="t" style="left:4038.00px;top:476.82px;font-size:32.70px;line-height:32.70px;color:#45474d;transform:scaleX(0.9143);transform-origin:0 0;">Comptabilisé [G]</div>
<div class="b" style="left:3993.00px;top:553.30px;width:9.50px;height:9.50px;background:#ee7722;"></div>
<div class="t" style="left:4038.00px;top:544.12px;font-size:32.70px;line-height:32.70px;color:#45474d;transform:scaleX(0.9281);transform-origin:0 0;">Documents</div>
<div class="b" style="left:3993.00px;top:620.60px;width:9.50px;height:9.50px;background:#ee7722;"></div>
<div class="t" style="left:4038.00px;top:611.42px;font-size:32.70px;line-height:32.70px;color:#45474d;transform:scaleX(0.9195);transform-origin:0 0;">Vue d&#x27;ensemble [G]</div>
<div class="b" style="left:3993.00px;top:687.90px;width:9.50px;height:9.50px;background:#ee7722;"></div>
<div class="t" style="left:4038.00px;top:678.72px;font-size:32.70px;line-height:32.70px;color:#45474d;transform:scaleX(0.9644);transform-origin:0 0;">Bloc-notes</div>
<svg class="b" style="left:4410px;top:2322px" width="90" height="90" viewBox="4410 2322 90 90">
<circle cx="4454" cy="2365.5" r="35" fill="none" stroke="#f9a54f" stroke-width="4.2"/>
<path d="M4434.5 2366 L4450 2349.5 V2362 H4474.5 V2371.5 H4450 V2383.5 Z" fill="#f9a54f"/>
</svg>
<svg class="b" style="left:3530px;top:2200px" width="320" height="110" viewBox="3530 2200 320 110">
<g fill="none" stroke="#f9a54f" stroke-width="3.4">
<circle cx="3580.7" cy="2252" r="34.3"/><circle cx="3694" cy="2252" r="34.3"/><circle cx="3806.5" cy="2252" r="34.3"/>
</g>
<g transform="translate(3581 2251.5) rotate(44) scale(0.88)" fill="none" stroke="#f9a54f" stroke-width="3.2" stroke-linecap="round">
<path d="M-2.5 -13 V17 a3.2 3.2 0 0 0 6.4 0 V-20 a5.6 5.6 0 0 0 -11.2 0 V19 a8 8 0 0 0 16 0 V-11"/>
</g>
<g transform="translate(3581 2251.5) rotate(44) scale(0.88)" fill="none" stroke="#fff" stroke-width="1" stroke-linecap="round">
<path d="M-2.5 -13 V17 a3.2 3.2 0 0 0 6.4 0 V-20 a5.6 5.6 0 0 0 -11.2 0 V19 a8 8 0 0 0 16 0 V-11"/>
</g>
<circle cx="3693.5" cy="2252.8" r="14.5" fill="#fde3c6" stroke="#f9a54f" stroke-width="3"/>
<g stroke="#f9a54f" stroke-width="1.3" stroke-dasharray="1.6 1.4" fill="none">
<path d="M3681 2252.8 H3706 M3693.5 2240 V2265 M3683 2246 H3704 M3683 2259.5 H3704"/>
<circle cx="3693.5" cy="2252.8" r="7"/>
</g>
<circle cx="3686" cy="2246" r="1.8" fill="#f9a54f"/><rect x="3697" y="2253" width="7" height="8" fill="#f9a54f" opacity=".55"/>
<g fill="#f9a54f">
<path d="M3787 2238 C3790 2233 3797 2235 3803 2241 C3812 2250 3820 2260 3823.2 2267.7 C3816 2261 3806 2252 3796 2246 C3790 2243 3785 2242 3787 2238 Z"/>
<path d="M3822.6 2234.8 C3812 2241 3800 2250 3794 2259 C3791 2264 3790 2269 3788 2268 C3785 2267 3786 2259 3791 2252 C3799 2243 3812 2236 3822.6 2234.8 Z"/>
</g>
</svg>
<svg class="b" style="left:2305px;top:2205px" width="90" height="90" viewBox="2305 2205 90 90">
<circle cx="2348.9" cy="2249.6" r="33.6" fill="none" stroke="#f7a04a" stroke-width="4.5"/>
<g fill="#f9a550">
<rect x="2330.7" y="2233" width="2.8" height="35.5"/><rect x="2364.5" y="2233" width="3" height="35.5"/>
<rect x="2336" y="2232" width="14.5" height="10"/><rect x="2353" y="2232" width="4.5" height="10"/>
<rect x="2330.7" y="2244.5" width="36.8" height="2.5"/><rect x="2330.7" y="2266" width="36.8" height="2.5"/>
<rect x="2337" y="2252" width="24" height="1.8"/><rect x="2337" y="2256.5" width="24" height="1.8"/><rect x="2337" y="2261" width="24" height="1.8"/>
</g>
</svg>
<div class="b" style="left:1615.5px;top:2254.3px;width:734.2px;height:106.2px;background:#fff;border:1.3px solid #c6c6c6;box-sizing:border-box;box-shadow:4px 5px 7px rgba(0,0,0,0.22)"></div>
<div class="b" style="left:1618.6px;top:2309px;width:728.4px;height:48.4px;background:#f9dddd;border:1.3px solid #f2a9a9;box-sizing:border-box"></div>
<div class="t" style="left:1691.00px;top:2268.50px;font-size:28.00px;line-height:28.00px;color:#b6bac1;transform:scaleX(0.9529);transform-origin:0 0;">Comptabiliser la transaction et compléter les détails</div>
<div class="t" style="left:1691.00px;top:2320.00px;font-size:28.00px;line-height:28.00px;color:#41454d;transform:scaleX(0.9531);transform-origin:0 0;">Comptabiliser la transaction et fermer</div>
<div class="b" style="left:0;top:0;width:4532px;height:2444px;box-sizing:border-box;border:1.6px solid #3a3a3a;pointer-events:none"></div>
</body></html>
